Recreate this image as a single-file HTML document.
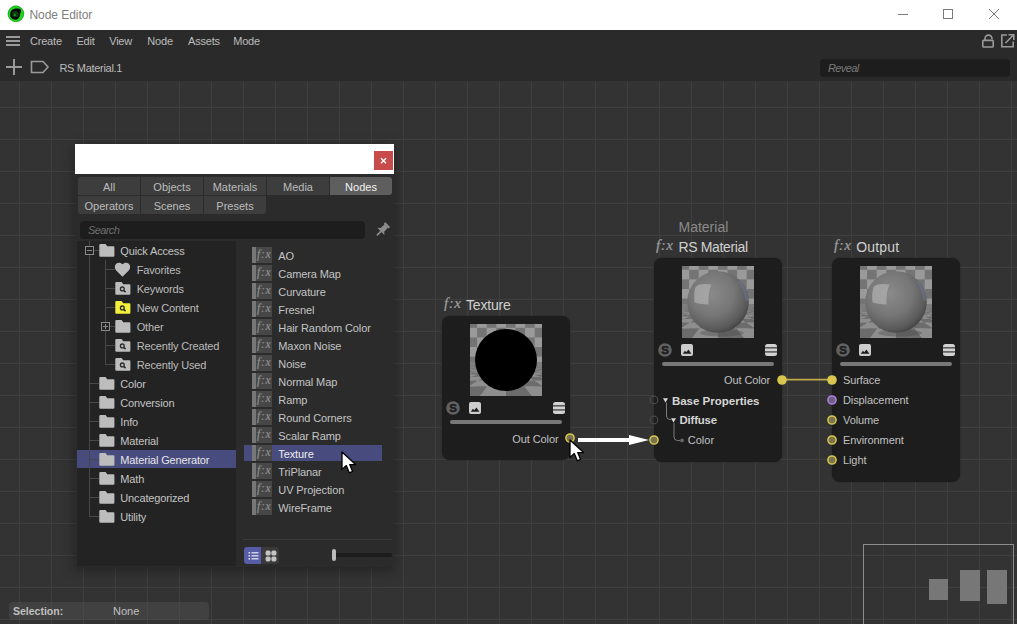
<!DOCTYPE html><html><head><meta charset="utf-8"><style>
html,body{margin:0;padding:0;width:1017px;height:624px;overflow:hidden;background:#353535;}
body{position:relative;font-family:"Liberation Sans",sans-serif;}
.b{position:absolute;}
.t{position:absolute;white-space:nowrap;}
.grid{background-color:#333333;
background-image:linear-gradient(to right,#3f3f3f 0,#3f3f3f 1px,transparent 1px),linear-gradient(to bottom,#3f3f3f 0,#3f3f3f 1px,transparent 1px);
background-size:32px 32px;background-position:19px 26px;}
</style></head><body>
<div class="b" style="left:0px;top:0px;width:1017px;height:30px;background:#ffffff;"></div>
<svg class="b" style="left:0;top:0" width="40" height="30" viewBox="0 0 40 30">
<defs><radialGradient id="lg" cx="50%" cy="50%" r="50%"><stop offset="0.55" stop-color="#0a3a0a"/><stop offset="0.75" stop-color="#10a010"/><stop offset="1" stop-color="#20e020"/></radialGradient></defs>
<circle cx="15.9" cy="13.8" r="8" fill="#1ed41e"/>
<circle cx="15.9" cy="13.8" r="7.9" fill="none" stroke="#0e8a0e" stroke-width="0.6"/>
<path d="M10.2 14.8 Q10 9.6 15.6 8.6 Q19.5 8 21 9.8 Q20.6 13 19.6 16.5 Q18.5 20 14.5 19.6 Q10.4 19 10.2 14.8 Z" fill="#000"/>
<ellipse cx="15.4" cy="14.2" rx="3.3" ry="3.1" fill="#0b3d0b"/>
<ellipse cx="14.8" cy="15" rx="1.4" ry="1.1" fill="#1a8f1a"/>
</svg>
<div class="t" style="left:29.5px;top:8.34px;font-size:12px;line-height:15px;color:#808080;font-weight:normal;font-style:normal;letter-spacing:-0.05px;font-family:'Liberation Sans', sans-serif;">Node Editor</div>
<svg class="b" style="left:880px;top:0" width="137" height="30">
<line x1="18" y1="14.5" x2="28" y2="14.5" stroke="#7a7a7a" stroke-width="1"/>
<rect x="63.5" y="9.5" width="9" height="9" fill="none" stroke="#7a7a7a" stroke-width="1"/>
<line x1="109" y1="9" x2="119" y2="19" stroke="#7a7a7a" stroke-width="1"/>
<line x1="119" y1="9" x2="109" y2="19" stroke="#7a7a7a" stroke-width="1"/>
</svg>
<div class="b" style="left:0px;top:30px;width:1017px;height:51px;background:#2a2a2a;"></div>
<div class="b" style="left:6px;top:36px;width:14px;height:2px;background:#9a9a9a;"></div><div class="b" style="left:6px;top:40px;width:14px;height:2px;background:#9a9a9a;"></div><div class="b" style="left:6px;top:44px;width:14px;height:2px;background:#9a9a9a;"></div>
<div class="t" style="left:30px;top:34.19px;font-size:11px;line-height:14px;color:#bcbcbc;font-weight:normal;font-style:normal;letter-spacing:-0.2px;font-family:'Liberation Sans', sans-serif;">Create</div>
<div class="t" style="left:76.4px;top:34.19px;font-size:11px;line-height:14px;color:#bcbcbc;font-weight:normal;font-style:normal;letter-spacing:-0.2px;font-family:'Liberation Sans', sans-serif;">Edit</div>
<div class="t" style="left:109.2px;top:34.19px;font-size:11px;line-height:14px;color:#bcbcbc;font-weight:normal;font-style:normal;letter-spacing:-0.2px;font-family:'Liberation Sans', sans-serif;">View</div>
<div class="t" style="left:147.3px;top:34.19px;font-size:11px;line-height:14px;color:#bcbcbc;font-weight:normal;font-style:normal;letter-spacing:-0.2px;font-family:'Liberation Sans', sans-serif;">Node</div>
<div class="t" style="left:188.1px;top:34.19px;font-size:11px;line-height:14px;color:#bcbcbc;font-weight:normal;font-style:normal;letter-spacing:-0.2px;font-family:'Liberation Sans', sans-serif;">Assets</div>
<div class="t" style="left:233.2px;top:34.19px;font-size:11px;line-height:14px;color:#bcbcbc;font-weight:normal;font-style:normal;letter-spacing:-0.2px;font-family:'Liberation Sans', sans-serif;">Mode</div>
<div class="b" style="left:6px;top:66px;width:16px;height:2px;background:#9a9a9a;"></div><div class="b" style="left:13px;top:59px;width:2px;height:16px;background:#9a9a9a;"></div>
<svg class="b" style="left:30px;top:60px" width="22" height="16">
<path d="M1.5 1.5 H13 L18 7 L13 12.5 H1.5 Z" fill="none" stroke="#9a9a9a" stroke-width="1.6"/></svg>
<div class="t" style="left:59.4px;top:61.19px;font-size:11px;line-height:14px;color:#bcbcbc;font-weight:normal;font-style:normal;letter-spacing:-0.3px;font-family:'Liberation Sans', sans-serif;">RS Material.1</div>
<div class="b" style="left:820px;top:59px;width:190px;height:18px;background:#1d1d1d;border-radius:4px;"></div>
<div class="t" style="left:828px;top:61.19px;font-size:11px;line-height:14px;color:#7a7a7a;font-weight:normal;font-style:italic;letter-spacing:-0.6px;font-family:'Liberation Sans', sans-serif;">Reveal</div>
<svg class="b" style="left:978px;top:30px" width="39" height="22">
<path d="M7 10 V8.6 A3.5 3.5 0 0 1 14 8.6 V9.2" fill="none" stroke="#9a9a9a" stroke-width="1.6"/>
<rect x="4.8" y="10.4" width="10.4" height="6.6" fill="none" stroke="#9a9a9a" stroke-width="1.6" rx="0.8"/>
<path d="M29 5 H23.8 V16.8 H35.2 V11.5" fill="none" stroke="#9a9a9a" stroke-width="1.6"/>
<path d="M27.5 13 L35.5 5 M30.5 4.8 H35.8 V10" fill="none" stroke="#9a9a9a" stroke-width="1.6"/>
</svg>
<div class="b grid" style="left:0;top:81px;width:1017px;height:543px;"></div>
<div class="b" style="left:75px;top:144px;width:319px;height:423px;box-shadow:0 3px 12px rgba(0,0,0,0.35);"></div>
<div class="b" style="left:75px;top:144px;width:319px;height:30px;background:#ffffff;"></div>
<div class="b" style="left:374px;top:151px;width:19px;height:19px;background:#c84b4b;"></div>
<svg class="b" style="left:374px;top:151px" width="19" height="19"><path d="M7 7.3 L12 12.3 M12 7.3 L7 12.3" stroke="#fff" stroke-width="1.4"/></svg>
<div class="b" style="left:75px;top:174px;width:319px;height:393px;background:#2b2b2b;"></div>
<div class="b" style="left:78px;top:177px;width:62px;height:18px;background:#3d3d3d;border-radius:3px 0 0 0;"></div>
<div class="t" style="left:78px;top:177px;width:62px;height:18px;"></div>
<div class="b" style="left:141px;top:177px;width:62px;height:18px;background:#3d3d3d;"></div>
<div class="t" style="left:141px;top:177px;width:62px;height:18px;"></div>
<div class="b" style="left:204px;top:177px;width:62px;height:18px;background:#3d3d3d;"></div>
<div class="t" style="left:204px;top:177px;width:62px;height:18px;"></div>
<div class="b" style="left:267px;top:177px;width:62px;height:18px;background:#3d3d3d;"></div>
<div class="t" style="left:267px;top:177px;width:62px;height:18px;"></div>
<div class="b" style="left:330px;top:177px;width:62px;height:18px;background:#5e5e5e;border-radius:0 3px 3px 0;"></div>
<div class="t" style="left:330px;top:177px;width:62px;height:18px;"></div>
<div class="b" style="left:78px;top:196px;width:62px;height:18px;background:#3d3d3d;border-radius:0 0 0 3px;"></div>
<div class="b" style="left:141px;top:196px;width:62px;height:18px;background:#3d3d3d;"></div>
<div class="b" style="left:204px;top:196px;width:62px;height:18px;background:#3d3d3d;border-radius:0 0 3px 0;"></div>
<div class="t" style="left:78px;top:180.19px;font-size:11px;line-height:14px;color:#bcbcbc;font-weight:normal;font-style:normal;letter-spacing:0px;font-family:'Liberation Sans', sans-serif;width:62px;text-align:center;">All</div>
<div class="t" style="left:141px;top:180.19px;font-size:11px;line-height:14px;color:#bcbcbc;font-weight:normal;font-style:normal;letter-spacing:0px;font-family:'Liberation Sans', sans-serif;width:62px;text-align:center;">Objects</div>
<div class="t" style="left:204px;top:180.19px;font-size:11px;line-height:14px;color:#bcbcbc;font-weight:normal;font-style:normal;letter-spacing:0px;font-family:'Liberation Sans', sans-serif;width:62px;text-align:center;">Materials</div>
<div class="t" style="left:267px;top:180.19px;font-size:11px;line-height:14px;color:#bcbcbc;font-weight:normal;font-style:normal;letter-spacing:0px;font-family:'Liberation Sans', sans-serif;width:62px;text-align:center;">Media</div>
<div class="t" style="left:330px;top:180.19px;font-size:11px;line-height:14px;color:#f2f2f2;font-weight:normal;font-style:normal;letter-spacing:0px;font-family:'Liberation Sans', sans-serif;width:62px;text-align:center;">Nodes</div>
<div class="t" style="left:78px;top:199.19px;font-size:11px;line-height:14px;color:#bcbcbc;font-weight:normal;font-style:normal;letter-spacing:0px;font-family:'Liberation Sans', sans-serif;width:62px;text-align:center;">Operators</div>
<div class="t" style="left:141px;top:199.19px;font-size:11px;line-height:14px;color:#bcbcbc;font-weight:normal;font-style:normal;letter-spacing:0px;font-family:'Liberation Sans', sans-serif;width:62px;text-align:center;">Scenes</div>
<div class="t" style="left:204px;top:199.19px;font-size:11px;line-height:14px;color:#bcbcbc;font-weight:normal;font-style:normal;letter-spacing:0px;font-family:'Liberation Sans', sans-serif;width:62px;text-align:center;">Presets</div>
<div class="b" style="left:80px;top:221px;width:285px;height:18px;background:#1d1d1d;border-radius:4px;"></div>
<div class="t" style="left:88px;top:222.69px;font-size:11px;line-height:14px;color:#6e6e6e;font-weight:normal;font-style:italic;letter-spacing:-0.6px;font-family:'Liberation Sans', sans-serif;">Search</div>
<svg class="b" style="left:360px;top:210px" width="40" height="40">
<g transform="translate(27.6,14.6) rotate(45)" fill="#8c8c8c">
<rect x="-3.4" y="0" width="6.8" height="2.2" rx="0.6"/>
<path d="M-2.3 2 H2.3 L2.6 7.4 L5 9.6 H-5 L-2.6 7.4 Z"/>
<rect x="-0.85" y="9" width="1.7" height="6.3" rx="0.8"/>
</g></svg>
<div class="b" style="left:77px;top:241px;width:159px;height:325px;background:#232323;"></div>
<div class="b" style="left:77px;top:450px;width:159px;height:18px;background:#474b7e;"></div>
<div class="b" style="left:89px;top:241px;width:1px;height:276px;background:#484848;"></div>
<div class="b" style="left:105px;top:260px;width:1px;height:105px;background:#484848;"></div>
<div class="b" style="left:89px;top:250px;width:10px;height:1px;background:#484848;"></div>
<svg class="b" style="left:99px;top:244px" width="16" height="13" viewBox="0 0 16 13">
<path d="M0.3 1.2 Q0.3 0 1.4 0 H6.6 L8.2 2.2 H14.4 Q15.4 2.2 15.4 3.3 V11.7 Q15.4 12.8 14.3 12.8 H1.4 Q0.3 12.8 0.3 11.7 Z" fill="#bdbdbd"/></svg>
<div class="t" style="left:120.3px;top:244.19px;font-size:11px;line-height:14px;color:#c4c4c4;font-weight:normal;font-style:normal;letter-spacing:-0.15px;font-family:'Liberation Sans', sans-serif;">Quick Access</div>
<div class="b" style="left:89px;top:383px;width:10px;height:1px;background:#484848;"></div>
<svg class="b" style="left:99px;top:377px" width="16" height="13" viewBox="0 0 16 13">
<path d="M0.3 1.2 Q0.3 0 1.4 0 H6.6 L8.2 2.2 H14.4 Q15.4 2.2 15.4 3.3 V11.7 Q15.4 12.8 14.3 12.8 H1.4 Q0.3 12.8 0.3 11.7 Z" fill="#bdbdbd"/></svg>
<div class="t" style="left:120.3px;top:377.19px;font-size:11px;line-height:14px;color:#c4c4c4;font-weight:normal;font-style:normal;letter-spacing:-0.15px;font-family:'Liberation Sans', sans-serif;">Color</div>
<div class="b" style="left:89px;top:402px;width:10px;height:1px;background:#484848;"></div>
<svg class="b" style="left:99px;top:396px" width="16" height="13" viewBox="0 0 16 13">
<path d="M0.3 1.2 Q0.3 0 1.4 0 H6.6 L8.2 2.2 H14.4 Q15.4 2.2 15.4 3.3 V11.7 Q15.4 12.8 14.3 12.8 H1.4 Q0.3 12.8 0.3 11.7 Z" fill="#bdbdbd"/></svg>
<div class="t" style="left:120.3px;top:396.19px;font-size:11px;line-height:14px;color:#c4c4c4;font-weight:normal;font-style:normal;letter-spacing:-0.15px;font-family:'Liberation Sans', sans-serif;">Conversion</div>
<div class="b" style="left:89px;top:421px;width:10px;height:1px;background:#484848;"></div>
<svg class="b" style="left:99px;top:415px" width="16" height="13" viewBox="0 0 16 13">
<path d="M0.3 1.2 Q0.3 0 1.4 0 H6.6 L8.2 2.2 H14.4 Q15.4 2.2 15.4 3.3 V11.7 Q15.4 12.8 14.3 12.8 H1.4 Q0.3 12.8 0.3 11.7 Z" fill="#bdbdbd"/></svg>
<div class="t" style="left:120.3px;top:415.19px;font-size:11px;line-height:14px;color:#c4c4c4;font-weight:normal;font-style:normal;letter-spacing:-0.15px;font-family:'Liberation Sans', sans-serif;">Info</div>
<div class="b" style="left:89px;top:440px;width:10px;height:1px;background:#484848;"></div>
<svg class="b" style="left:99px;top:434px" width="16" height="13" viewBox="0 0 16 13">
<path d="M0.3 1.2 Q0.3 0 1.4 0 H6.6 L8.2 2.2 H14.4 Q15.4 2.2 15.4 3.3 V11.7 Q15.4 12.8 14.3 12.8 H1.4 Q0.3 12.8 0.3 11.7 Z" fill="#bdbdbd"/></svg>
<div class="t" style="left:120.3px;top:434.19px;font-size:11px;line-height:14px;color:#c4c4c4;font-weight:normal;font-style:normal;letter-spacing:-0.15px;font-family:'Liberation Sans', sans-serif;">Material</div>
<div class="b" style="left:89px;top:459px;width:10px;height:1px;background:#484848;"></div>
<svg class="b" style="left:99px;top:453px" width="16" height="13" viewBox="0 0 16 13">
<path d="M0.3 1.2 Q0.3 0 1.4 0 H6.6 L8.2 2.2 H14.4 Q15.4 2.2 15.4 3.3 V11.7 Q15.4 12.8 14.3 12.8 H1.4 Q0.3 12.8 0.3 11.7 Z" fill="#bdbdbd"/></svg>
<div class="t" style="left:120.3px;top:453.19px;font-size:11px;line-height:14px;color:#e6e6e6;font-weight:normal;font-style:normal;letter-spacing:-0.15px;font-family:'Liberation Sans', sans-serif;">Material Generator</div>
<div class="b" style="left:89px;top:478px;width:10px;height:1px;background:#484848;"></div>
<svg class="b" style="left:99px;top:472px" width="16" height="13" viewBox="0 0 16 13">
<path d="M0.3 1.2 Q0.3 0 1.4 0 H6.6 L8.2 2.2 H14.4 Q15.4 2.2 15.4 3.3 V11.7 Q15.4 12.8 14.3 12.8 H1.4 Q0.3 12.8 0.3 11.7 Z" fill="#bdbdbd"/></svg>
<div class="t" style="left:120.3px;top:472.19px;font-size:11px;line-height:14px;color:#c4c4c4;font-weight:normal;font-style:normal;letter-spacing:-0.15px;font-family:'Liberation Sans', sans-serif;">Math</div>
<div class="b" style="left:89px;top:497px;width:10px;height:1px;background:#484848;"></div>
<svg class="b" style="left:99px;top:491px" width="16" height="13" viewBox="0 0 16 13">
<path d="M0.3 1.2 Q0.3 0 1.4 0 H6.6 L8.2 2.2 H14.4 Q15.4 2.2 15.4 3.3 V11.7 Q15.4 12.8 14.3 12.8 H1.4 Q0.3 12.8 0.3 11.7 Z" fill="#bdbdbd"/></svg>
<div class="t" style="left:120.3px;top:491.19px;font-size:11px;line-height:14px;color:#c4c4c4;font-weight:normal;font-style:normal;letter-spacing:-0.15px;font-family:'Liberation Sans', sans-serif;">Uncategorized</div>
<div class="b" style="left:89px;top:516px;width:10px;height:1px;background:#484848;"></div>
<svg class="b" style="left:99px;top:510px" width="16" height="13" viewBox="0 0 16 13">
<path d="M0.3 1.2 Q0.3 0 1.4 0 H6.6 L8.2 2.2 H14.4 Q15.4 2.2 15.4 3.3 V11.7 Q15.4 12.8 14.3 12.8 H1.4 Q0.3 12.8 0.3 11.7 Z" fill="#bdbdbd"/></svg>
<div class="t" style="left:120.3px;top:510.19px;font-size:11px;line-height:14px;color:#c4c4c4;font-weight:normal;font-style:normal;letter-spacing:-0.15px;font-family:'Liberation Sans', sans-serif;">Utility</div>
<div class="b" style="left:85px;top:246px;width:9px;height:9px;background:#232323;box-sizing:border-box;border:1px solid #8a8a8a;"></div>
<div class="b" style="left:87px;top:250px;width:5px;height:1px;background:#8a8a8a;"></div>
<div class="b" style="left:105px;top:269px;width:10px;height:1px;background:#484848;"></div>
<svg class="b" style="left:114px;top:261px" width="17" height="17" viewBox="0 0 17 17">
<path d="M8.5 15.8 L2.2 9.4 C0.4 7.6 0.3 4.6 2.2 2.8 C4 1.1 6.8 1.3 8.5 3.3 C10.2 1.3 13 1.1 14.8 2.8 C16.7 4.6 16.6 7.6 14.8 9.4 Z" fill="#bdbdbd"/></svg>
<div class="t" style="left:136.7px;top:263.19px;font-size:11px;line-height:14px;color:#bcbcbc;font-weight:normal;font-style:normal;letter-spacing:-0.15px;font-family:'Liberation Sans', sans-serif;">Favorites</div>
<div class="b" style="left:105px;top:288px;width:10px;height:1px;background:#484848;"></div>
<svg class="b" style="left:115px;top:282px" width="16" height="13" viewBox="0 0 16 13">
<path d="M0.3 1.2 Q0.3 0 1.4 0 H6.6 L8.2 2.2 H14.4 Q15.4 2.2 15.4 3.3 V11.7 Q15.4 12.8 14.3 12.8 H1.4 Q0.3 12.8 0.3 11.7 Z" fill="#bdbdbd"/><circle cx="7.3" cy="6.9" r="1.9" fill="none" stroke="#2a2a2a" stroke-width="1.3"/><path d="M8.6 8.2 L10.6 10.1" stroke="#2a2a2a" stroke-width="1.5"/></svg>
<div class="t" style="left:136.7px;top:282.19px;font-size:11px;line-height:14px;color:#bcbcbc;font-weight:normal;font-style:normal;letter-spacing:-0.15px;font-family:'Liberation Sans', sans-serif;">Keywords</div>
<div class="b" style="left:105px;top:307px;width:10px;height:1px;background:#484848;"></div>
<svg class="b" style="left:115px;top:301px" width="16" height="13" viewBox="0 0 16 13">
<path d="M0.3 1.2 Q0.3 0 1.4 0 H6.6 L8.2 2.2 H14.4 Q15.4 2.2 15.4 3.3 V11.7 Q15.4 12.8 14.3 12.8 H1.4 Q0.3 12.8 0.3 11.7 Z" fill="#f2f03c"/><circle cx="7.3" cy="6.9" r="1.9" fill="none" stroke="#2a2a2a" stroke-width="1.3"/><path d="M8.6 8.2 L10.6 10.1" stroke="#2a2a2a" stroke-width="1.5"/></svg>
<div class="t" style="left:136.7px;top:301.19px;font-size:11px;line-height:14px;color:#bcbcbc;font-weight:normal;font-style:normal;letter-spacing:-0.15px;font-family:'Liberation Sans', sans-serif;">New Content</div>
<div class="b" style="left:105px;top:326px;width:10px;height:1px;background:#484848;"></div>
<svg class="b" style="left:115px;top:320px" width="16" height="13" viewBox="0 0 16 13">
<path d="M0.3 1.2 Q0.3 0 1.4 0 H6.6 L8.2 2.2 H14.4 Q15.4 2.2 15.4 3.3 V11.7 Q15.4 12.8 14.3 12.8 H1.4 Q0.3 12.8 0.3 11.7 Z" fill="#bdbdbd"/></svg>
<div class="b" style="left:101px;top:322px;width:9px;height:9px;background:#232323;box-sizing:border-box;border:1px solid #8a8a8a;"></div>
<div class="b" style="left:103px;top:326px;width:5px;height:1px;background:#8a8a8a;"></div><div class="b" style="left:105px;top:324px;width:1px;height:5px;background:#8a8a8a;"></div>
<div class="t" style="left:136.7px;top:320.19px;font-size:11px;line-height:14px;color:#bcbcbc;font-weight:normal;font-style:normal;letter-spacing:-0.15px;font-family:'Liberation Sans', sans-serif;">Other</div>
<div class="b" style="left:105px;top:345px;width:10px;height:1px;background:#484848;"></div>
<svg class="b" style="left:115px;top:339px" width="16" height="13" viewBox="0 0 16 13">
<path d="M0.3 1.2 Q0.3 0 1.4 0 H6.6 L8.2 2.2 H14.4 Q15.4 2.2 15.4 3.3 V11.7 Q15.4 12.8 14.3 12.8 H1.4 Q0.3 12.8 0.3 11.7 Z" fill="#bdbdbd"/><circle cx="7.3" cy="6.9" r="1.9" fill="none" stroke="#2a2a2a" stroke-width="1.3"/><path d="M8.6 8.2 L10.6 10.1" stroke="#2a2a2a" stroke-width="1.5"/></svg>
<div class="t" style="left:136.7px;top:339.19px;font-size:11px;line-height:14px;color:#bcbcbc;font-weight:normal;font-style:normal;letter-spacing:-0.15px;font-family:'Liberation Sans', sans-serif;">Recently Created</div>
<div class="b" style="left:105px;top:364px;width:10px;height:1px;background:#484848;"></div>
<svg class="b" style="left:115px;top:358px" width="16" height="13" viewBox="0 0 16 13">
<path d="M0.3 1.2 Q0.3 0 1.4 0 H6.6 L8.2 2.2 H14.4 Q15.4 2.2 15.4 3.3 V11.7 Q15.4 12.8 14.3 12.8 H1.4 Q0.3 12.8 0.3 11.7 Z" fill="#bdbdbd"/><circle cx="7.3" cy="6.9" r="1.9" fill="none" stroke="#2a2a2a" stroke-width="1.3"/><path d="M8.6 8.2 L10.6 10.1" stroke="#2a2a2a" stroke-width="1.5"/></svg>
<div class="t" style="left:136.7px;top:358.19px;font-size:11px;line-height:14px;color:#bcbcbc;font-weight:normal;font-style:normal;letter-spacing:-0.15px;font-family:'Liberation Sans', sans-serif;">Recently Used</div>
<div class="b" style="left:244px;top:445px;width:138px;height:16px;background:#474b7e;"></div>
<div class="b" style="left:252px;top:247px;width:4px;height:16px;background:#777777;"></div>
<div class="b" style="left:256px;top:247px;width:16px;height:16px;background:#474747;"></div>
<svg class="b" style="left:254px;top:247px" width="20" height="16"><text x="3" y="11" font-family="Liberation Serif" font-style="italic" font-size="11.5" letter-spacing="0.8" fill="#8e8e8e" stroke="#8e8e8e" stroke-width="0.2">f:x</text></svg>
<div class="t" style="left:278.3px;top:249.19px;font-size:11px;line-height:14px;color:#c4c4c4;font-weight:normal;font-style:normal;letter-spacing:-0.1px;font-family:'Liberation Sans', sans-serif;">AO</div>
<div class="b" style="left:252px;top:265px;width:4px;height:16px;background:#777777;"></div>
<div class="b" style="left:256px;top:265px;width:16px;height:16px;background:#474747;"></div>
<svg class="b" style="left:254px;top:265px" width="20" height="16"><text x="3" y="11" font-family="Liberation Serif" font-style="italic" font-size="11.5" letter-spacing="0.8" fill="#8e8e8e" stroke="#8e8e8e" stroke-width="0.2">f:x</text></svg>
<div class="t" style="left:278.3px;top:267.19px;font-size:11px;line-height:14px;color:#c4c4c4;font-weight:normal;font-style:normal;letter-spacing:-0.1px;font-family:'Liberation Sans', sans-serif;">Camera Map</div>
<div class="b" style="left:252px;top:283px;width:4px;height:16px;background:#777777;"></div>
<div class="b" style="left:256px;top:283px;width:16px;height:16px;background:#474747;"></div>
<svg class="b" style="left:254px;top:283px" width="20" height="16"><text x="3" y="11" font-family="Liberation Serif" font-style="italic" font-size="11.5" letter-spacing="0.8" fill="#8e8e8e" stroke="#8e8e8e" stroke-width="0.2">f:x</text></svg>
<div class="t" style="left:278.3px;top:285.19px;font-size:11px;line-height:14px;color:#c4c4c4;font-weight:normal;font-style:normal;letter-spacing:-0.1px;font-family:'Liberation Sans', sans-serif;">Curvature</div>
<div class="b" style="left:252px;top:301px;width:4px;height:16px;background:#777777;"></div>
<div class="b" style="left:256px;top:301px;width:16px;height:16px;background:#474747;"></div>
<svg class="b" style="left:254px;top:301px" width="20" height="16"><text x="3" y="11" font-family="Liberation Serif" font-style="italic" font-size="11.5" letter-spacing="0.8" fill="#8e8e8e" stroke="#8e8e8e" stroke-width="0.2">f:x</text></svg>
<div class="t" style="left:278.3px;top:303.19px;font-size:11px;line-height:14px;color:#c4c4c4;font-weight:normal;font-style:normal;letter-spacing:-0.1px;font-family:'Liberation Sans', sans-serif;">Fresnel</div>
<div class="b" style="left:252px;top:319px;width:4px;height:16px;background:#777777;"></div>
<div class="b" style="left:256px;top:319px;width:16px;height:16px;background:#474747;"></div>
<svg class="b" style="left:254px;top:319px" width="20" height="16"><text x="3" y="11" font-family="Liberation Serif" font-style="italic" font-size="11.5" letter-spacing="0.8" fill="#8e8e8e" stroke="#8e8e8e" stroke-width="0.2">f:x</text></svg>
<div class="t" style="left:278.3px;top:321.19px;font-size:11px;line-height:14px;color:#c4c4c4;font-weight:normal;font-style:normal;letter-spacing:-0.1px;font-family:'Liberation Sans', sans-serif;">Hair Random Color</div>
<div class="b" style="left:252px;top:337px;width:4px;height:16px;background:#777777;"></div>
<div class="b" style="left:256px;top:337px;width:16px;height:16px;background:#474747;"></div>
<svg class="b" style="left:254px;top:337px" width="20" height="16"><text x="3" y="11" font-family="Liberation Serif" font-style="italic" font-size="11.5" letter-spacing="0.8" fill="#8e8e8e" stroke="#8e8e8e" stroke-width="0.2">f:x</text></svg>
<div class="t" style="left:278.3px;top:339.19px;font-size:11px;line-height:14px;color:#c4c4c4;font-weight:normal;font-style:normal;letter-spacing:-0.1px;font-family:'Liberation Sans', sans-serif;">Maxon Noise</div>
<div class="b" style="left:252px;top:355px;width:4px;height:16px;background:#777777;"></div>
<div class="b" style="left:256px;top:355px;width:16px;height:16px;background:#474747;"></div>
<svg class="b" style="left:254px;top:355px" width="20" height="16"><text x="3" y="11" font-family="Liberation Serif" font-style="italic" font-size="11.5" letter-spacing="0.8" fill="#8e8e8e" stroke="#8e8e8e" stroke-width="0.2">f:x</text></svg>
<div class="t" style="left:278.3px;top:357.19px;font-size:11px;line-height:14px;color:#c4c4c4;font-weight:normal;font-style:normal;letter-spacing:-0.1px;font-family:'Liberation Sans', sans-serif;">Noise</div>
<div class="b" style="left:252px;top:373px;width:4px;height:16px;background:#777777;"></div>
<div class="b" style="left:256px;top:373px;width:16px;height:16px;background:#474747;"></div>
<svg class="b" style="left:254px;top:373px" width="20" height="16"><text x="3" y="11" font-family="Liberation Serif" font-style="italic" font-size="11.5" letter-spacing="0.8" fill="#8e8e8e" stroke="#8e8e8e" stroke-width="0.2">f:x</text></svg>
<div class="t" style="left:278.3px;top:375.19px;font-size:11px;line-height:14px;color:#c4c4c4;font-weight:normal;font-style:normal;letter-spacing:-0.1px;font-family:'Liberation Sans', sans-serif;">Normal Map</div>
<div class="b" style="left:252px;top:391px;width:4px;height:16px;background:#777777;"></div>
<div class="b" style="left:256px;top:391px;width:16px;height:16px;background:#474747;"></div>
<svg class="b" style="left:254px;top:391px" width="20" height="16"><text x="3" y="11" font-family="Liberation Serif" font-style="italic" font-size="11.5" letter-spacing="0.8" fill="#8e8e8e" stroke="#8e8e8e" stroke-width="0.2">f:x</text></svg>
<div class="t" style="left:278.3px;top:393.19px;font-size:11px;line-height:14px;color:#c4c4c4;font-weight:normal;font-style:normal;letter-spacing:-0.1px;font-family:'Liberation Sans', sans-serif;">Ramp</div>
<div class="b" style="left:252px;top:409px;width:4px;height:16px;background:#777777;"></div>
<div class="b" style="left:256px;top:409px;width:16px;height:16px;background:#474747;"></div>
<svg class="b" style="left:254px;top:409px" width="20" height="16"><text x="3" y="11" font-family="Liberation Serif" font-style="italic" font-size="11.5" letter-spacing="0.8" fill="#8e8e8e" stroke="#8e8e8e" stroke-width="0.2">f:x</text></svg>
<div class="t" style="left:278.3px;top:411.19px;font-size:11px;line-height:14px;color:#c4c4c4;font-weight:normal;font-style:normal;letter-spacing:-0.1px;font-family:'Liberation Sans', sans-serif;">Round Corners</div>
<div class="b" style="left:252px;top:427px;width:4px;height:16px;background:#777777;"></div>
<div class="b" style="left:256px;top:427px;width:16px;height:16px;background:#474747;"></div>
<svg class="b" style="left:254px;top:427px" width="20" height="16"><text x="3" y="11" font-family="Liberation Serif" font-style="italic" font-size="11.5" letter-spacing="0.8" fill="#8e8e8e" stroke="#8e8e8e" stroke-width="0.2">f:x</text></svg>
<div class="t" style="left:278.3px;top:429.19px;font-size:11px;line-height:14px;color:#c4c4c4;font-weight:normal;font-style:normal;letter-spacing:-0.1px;font-family:'Liberation Sans', sans-serif;">Scalar Ramp</div>
<div class="b" style="left:252px;top:445px;width:4px;height:16px;background:#777777;"></div>
<div class="b" style="left:256px;top:445px;width:16px;height:16px;background:#474747;"></div>
<svg class="b" style="left:254px;top:445px" width="20" height="16"><text x="3" y="11" font-family="Liberation Serif" font-style="italic" font-size="11.5" letter-spacing="0.8" fill="#8e8e8e" stroke="#8e8e8e" stroke-width="0.2">f:x</text></svg>
<div class="t" style="left:278.3px;top:447.19px;font-size:11px;line-height:14px;color:#eeeeee;font-weight:normal;font-style:normal;letter-spacing:-0.1px;font-family:'Liberation Sans', sans-serif;">Texture</div>
<div class="b" style="left:252px;top:463px;width:4px;height:16px;background:#777777;"></div>
<div class="b" style="left:256px;top:463px;width:16px;height:16px;background:#474747;"></div>
<svg class="b" style="left:254px;top:463px" width="20" height="16"><text x="3" y="11" font-family="Liberation Serif" font-style="italic" font-size="11.5" letter-spacing="0.8" fill="#8e8e8e" stroke="#8e8e8e" stroke-width="0.2">f:x</text></svg>
<div class="t" style="left:278.3px;top:465.19px;font-size:11px;line-height:14px;color:#c4c4c4;font-weight:normal;font-style:normal;letter-spacing:-0.1px;font-family:'Liberation Sans', sans-serif;">TriPlanar</div>
<div class="b" style="left:252px;top:481px;width:4px;height:16px;background:#777777;"></div>
<div class="b" style="left:256px;top:481px;width:16px;height:16px;background:#474747;"></div>
<svg class="b" style="left:254px;top:481px" width="20" height="16"><text x="3" y="11" font-family="Liberation Serif" font-style="italic" font-size="11.5" letter-spacing="0.8" fill="#8e8e8e" stroke="#8e8e8e" stroke-width="0.2">f:x</text></svg>
<div class="t" style="left:278.3px;top:483.19px;font-size:11px;line-height:14px;color:#c4c4c4;font-weight:normal;font-style:normal;letter-spacing:-0.1px;font-family:'Liberation Sans', sans-serif;">UV Projection</div>
<div class="b" style="left:252px;top:499px;width:4px;height:16px;background:#777777;"></div>
<div class="b" style="left:256px;top:499px;width:16px;height:16px;background:#474747;"></div>
<svg class="b" style="left:254px;top:499px" width="20" height="16"><text x="3" y="11" font-family="Liberation Serif" font-style="italic" font-size="11.5" letter-spacing="0.8" fill="#8e8e8e" stroke="#8e8e8e" stroke-width="0.2">f:x</text></svg>
<div class="t" style="left:278.3px;top:501.19px;font-size:11px;line-height:14px;color:#c4c4c4;font-weight:normal;font-style:normal;letter-spacing:-0.1px;font-family:'Liberation Sans', sans-serif;">WireFrame</div>
<div class="b" style="left:243px;top:539px;width:149px;height:1px;background:#3a3a3a;"></div>
<div class="b" style="left:244px;top:547px;width:17px;height:17px;background:#575ca6;border-radius:3px 0 0 3px;"></div>
<div class="b" style="left:261px;top:547px;width:18px;height:17px;background:#3a3a3a;border-radius:0 3px 3px 0;"></div>
<svg class="b" style="left:244px;top:547px" width="35" height="17">
<g fill="#d8d8ec"><rect x="4.5" y="5" width="1.6" height="1.6"/><rect x="4.5" y="8" width="1.6" height="1.6"/><rect x="4.5" y="11" width="1.6" height="1.6"/>
<rect x="7.5" y="5.1" width="7" height="1.4"/><rect x="7.5" y="8.1" width="7" height="1.4"/><rect x="7.5" y="11.1" width="7" height="1.4"/></g>
<g fill="#c4c4c4"><rect x="21.6" y="3.6" width="5" height="5" rx="1.6"/><rect x="27.4" y="3.6" width="5" height="5" rx="1.6"/><rect x="21.6" y="9.4" width="5" height="5" rx="1.6"/><rect x="27.4" y="9.4" width="5" height="5" rx="1.6"/></g>
</svg>
<div class="b" style="left:334px;top:553px;width:58px;height:4px;background:#1c1c1c;border-radius:2px;"></div>
<div class="b" style="left:332px;top:549px;width:4px;height:12px;background:#bbbbbb;border-radius:2px;"></div>
<svg class="b" style="left:441px;top:295px" width="26" height="22"><text x="3" y="13.2" font-family="Liberation Serif" font-style="italic" font-size="15" letter-spacing="0.6" fill="#a0a0a0" stroke="#a0a0a0" stroke-width="0.2">f:x</text></svg>
<div class="t" style="left:466px;top:296.15px;font-size:14px;line-height:18px;color:#d0d0d0;font-weight:normal;font-style:normal;letter-spacing:-0.2px;font-family:'Liberation Sans', sans-serif;">Texture</div>
<div class="b" style="left:442px;top:316px;width:128px;height:144px;background:#1d1d1d;border-radius:8px;box-shadow:0 0 1.5px rgba(0,0,0,0.45);"></div>
<svg class="b" style="left:470px;top:324px" width="72" height="72" viewBox="0 0 72 72">
<defs>
<pattern id="chk470" width="19.2" height="19.2" patternUnits="userSpaceOnUse" x="-2.5" y="-5.8">
<rect width="19.2" height="19.2" fill="#9a9a9a"/><rect width="9.6" height="9.6" fill="#747474"/><rect x="9.6" y="9.6" width="9.6" height="9.6" fill="#747474"/></pattern>
<clipPath id="cl470"><rect width="72" height="72"/></clipPath>
</defs>
<g clip-path="url(#cl470)">
<rect width="72" height="72" fill="url(#chk470)"/>
<rect y="38" width="72" height="8" fill="#7e7e7e"/>
<path d="M-18.7 73.8 L8.6 73.8 L17.4 62.3 L-1.1 62.3 Z" fill="#6c6c6c"/><path d="M8.6 73.8 L36.0 73.8 L36.0 62.3 L17.4 62.3 Z" fill="#8e8e8e"/><path d="M36.0 73.8 L63.4 73.8 L54.6 62.3 L36.0 62.3 Z" fill="#6c6c6c"/><path d="M63.4 73.8 L90.7 73.8 L73.1 62.3 L54.6 62.3 Z" fill="#8e8e8e"/><path d="M-19.7 62.3 L-1.1 62.3 L7.9 56.4 L-6.2 56.4 Z" fill="#6c6c6c"/><path d="M-1.1 62.3 L17.4 62.3 L21.9 56.4 L7.9 56.4 Z" fill="#8e8e8e"/><path d="M17.4 62.3 L36.0 62.3 L36.0 56.4 L21.9 56.4 Z" fill="#6c6c6c"/><path d="M36.0 62.3 L54.6 62.3 L50.1 56.4 L36.0 56.4 Z" fill="#8e8e8e"/><path d="M54.6 62.3 L73.1 62.3 L64.1 56.4 L50.1 56.4 Z" fill="#6c6c6c"/><path d="M73.1 62.3 L91.7 62.3 L78.2 56.4 L64.1 56.4 Z" fill="#8e8e8e"/><path d="M-20.2 56.4 L-6.2 56.4 L2.1 52.8 L-9.2 52.8 Z" fill="#6c6c6c"/><path d="M-6.2 56.4 L7.9 56.4 L13.4 52.8 L2.1 52.8 Z" fill="#8e8e8e"/><path d="M7.9 56.4 L21.9 56.4 L24.7 52.8 L13.4 52.8 Z" fill="#6c6c6c"/><path d="M21.9 56.4 L36.0 56.4 L36.0 52.8 L24.7 52.8 Z" fill="#8e8e8e"/><path d="M36.0 56.4 L50.1 56.4 L47.3 52.8 L36.0 52.8 Z" fill="#6c6c6c"/><path d="M50.1 56.4 L64.1 56.4 L58.6 52.8 L47.3 52.8 Z" fill="#8e8e8e"/><path d="M64.1 56.4 L78.2 56.4 L69.9 52.8 L58.6 52.8 Z" fill="#6c6c6c"/><path d="M78.2 56.4 L92.2 56.4 L81.2 52.8 L69.9 52.8 Z" fill="#8e8e8e"/><path d="M-9.2 52.8 L2.1 52.8 L7.6 50.4 L-1.8 50.4 Z" fill="#8e8e8e"/><path d="M2.1 52.8 L13.4 52.8 L17.1 50.4 L7.6 50.4 Z" fill="#6c6c6c"/><path d="M13.4 52.8 L24.7 52.8 L26.5 50.4 L17.1 50.4 Z" fill="#8e8e8e"/><path d="M24.7 52.8 L36.0 52.8 L36.0 50.4 L26.5 50.4 Z" fill="#6c6c6c"/><path d="M36.0 52.8 L47.3 52.8 L45.5 50.4 L36.0 50.4 Z" fill="#8e8e8e"/><path d="M47.3 52.8 L58.6 52.8 L54.9 50.4 L45.5 50.4 Z" fill="#6c6c6c"/><path d="M58.6 52.8 L69.9 52.8 L64.4 50.4 L54.9 50.4 Z" fill="#8e8e8e"/><path d="M69.9 52.8 L81.2 52.8 L73.8 50.4 L64.4 50.4 Z" fill="#6c6c6c"/><path d="M-11.3 50.4 L-1.8 50.4 L3.5 48.6 L-4.6 48.6 Z" fill="#8e8e8e"/><path d="M-1.8 50.4 L7.6 50.4 L11.6 48.6 L3.5 48.6 Z" fill="#6c6c6c"/><path d="M7.6 50.4 L17.1 50.4 L19.8 48.6 L11.6 48.6 Z" fill="#8e8e8e"/><path d="M17.1 50.4 L26.5 50.4 L27.9 48.6 L19.8 48.6 Z" fill="#6c6c6c"/><path d="M26.5 50.4 L36.0 50.4 L36.0 48.6 L27.9 48.6 Z" fill="#8e8e8e"/><path d="M36.0 50.4 L45.5 50.4 L44.1 48.6 L36.0 48.6 Z" fill="#6c6c6c"/><path d="M45.5 50.4 L54.9 50.4 L52.2 48.6 L44.1 48.6 Z" fill="#8e8e8e"/><path d="M54.9 50.4 L64.4 50.4 L60.4 48.6 L52.2 48.6 Z" fill="#6c6c6c"/><path d="M64.4 50.4 L73.8 50.4 L68.5 48.6 L60.4 48.6 Z" fill="#8e8e8e"/><path d="M73.8 50.4 L83.3 50.4 L76.6 48.6 L68.5 48.6 Z" fill="#6c6c6c"/><path d="M-12.8 48.6 L-4.6 48.6 L0.4 47.3 L-6.7 47.3 Z" fill="#8e8e8e"/><path d="M-4.6 48.6 L3.5 48.6 L7.5 47.3 L0.4 47.3 Z" fill="#6c6c6c"/><path d="M3.5 48.6 L11.6 48.6 L14.6 47.3 L7.5 47.3 Z" fill="#8e8e8e"/><path d="M11.6 48.6 L19.8 48.6 L21.8 47.3 L14.6 47.3 Z" fill="#6c6c6c"/><path d="M19.8 48.6 L27.9 48.6 L28.9 47.3 L21.8 47.3 Z" fill="#8e8e8e"/><path d="M27.9 48.6 L36.0 48.6 L36.0 47.3 L28.9 47.3 Z" fill="#6c6c6c"/><path d="M36.0 48.6 L44.1 48.6 L43.1 47.3 L36.0 47.3 Z" fill="#8e8e8e"/><path d="M44.1 48.6 L52.2 48.6 L50.2 47.3 L43.1 47.3 Z" fill="#6c6c6c"/><path d="M52.2 48.6 L60.4 48.6 L57.4 47.3 L50.2 47.3 Z" fill="#8e8e8e"/><path d="M60.4 48.6 L68.5 48.6 L64.5 47.3 L57.4 47.3 Z" fill="#6c6c6c"/><path d="M68.5 48.6 L76.6 48.6 L71.6 47.3 L64.5 47.3 Z" fill="#8e8e8e"/><path d="M76.6 48.6 L84.8 48.6 L78.7 47.3 L71.6 47.3 Z" fill="#6c6c6c"/><path d="M-6.7 47.3 L0.4 47.3 L4.3 46.3 L-2.0 46.3 Z" fill="#6c6c6c"/><path d="M0.4 47.3 L7.5 47.3 L10.6 46.3 L4.3 46.3 Z" fill="#8e8e8e"/><path d="M7.5 47.3 L14.6 47.3 L17.0 46.3 L10.6 46.3 Z" fill="#6c6c6c"/><path d="M14.6 47.3 L21.8 47.3 L23.3 46.3 L17.0 46.3 Z" fill="#8e8e8e"/><path d="M21.8 47.3 L28.9 47.3 L29.7 46.3 L23.3 46.3 Z" fill="#6c6c6c"/><path d="M28.9 47.3 L36.0 47.3 L36.0 46.3 L29.7 46.3 Z" fill="#8e8e8e"/><path d="M36.0 47.3 L43.1 47.3 L42.3 46.3 L36.0 46.3 Z" fill="#6c6c6c"/><path d="M43.1 47.3 L50.2 47.3 L48.7 46.3 L42.3 46.3 Z" fill="#8e8e8e"/><path d="M50.2 47.3 L57.4 47.3 L55.0 46.3 L48.7 46.3 Z" fill="#6c6c6c"/><path d="M57.4 47.3 L64.5 47.3 L61.4 46.3 L55.0 46.3 Z" fill="#8e8e8e"/><path d="M64.5 47.3 L71.6 47.3 L67.7 46.3 L61.4 46.3 Z" fill="#6c6c6c"/><path d="M71.6 47.3 L78.7 47.3 L74.0 46.3 L67.7 46.3 Z" fill="#8e8e8e"/><path d="M-8.4 46.3 L-2.0 46.3 L1.7 45.5 L-4.0 45.5 Z" fill="#6c6c6c"/><path d="M-2.0 46.3 L4.3 46.3 L7.4 45.5 L1.7 45.5 Z" fill="#8e8e8e"/><path d="M4.3 46.3 L10.6 46.3 L13.1 45.5 L7.4 45.5 Z" fill="#6c6c6c"/><path d="M10.6 46.3 L17.0 46.3 L18.9 45.5 L13.1 45.5 Z" fill="#8e8e8e"/><path d="M17.0 46.3 L23.3 46.3 L24.6 45.5 L18.9 45.5 Z" fill="#6c6c6c"/><path d="M23.3 46.3 L29.7 46.3 L30.3 45.5 L24.6 45.5 Z" fill="#8e8e8e"/><path d="M29.7 46.3 L36.0 46.3 L36.0 45.5 L30.3 45.5 Z" fill="#6c6c6c"/><path d="M36.0 46.3 L42.3 46.3 L41.7 45.5 L36.0 45.5 Z" fill="#8e8e8e"/><path d="M42.3 46.3 L48.7 46.3 L47.4 45.5 L41.7 45.5 Z" fill="#6c6c6c"/><path d="M48.7 46.3 L55.0 46.3 L53.1 45.5 L47.4 45.5 Z" fill="#8e8e8e"/><path d="M55.0 46.3 L61.4 46.3 L58.9 45.5 L53.1 45.5 Z" fill="#6c6c6c"/><path d="M61.4 46.3 L67.7 46.3 L64.6 45.5 L58.9 45.5 Z" fill="#8e8e8e"/><path d="M67.7 46.3 L74.0 46.3 L70.3 45.5 L64.6 45.5 Z" fill="#6c6c6c"/><path d="M74.0 46.3 L80.4 46.3 L76.0 45.5 L70.3 45.5 Z" fill="#8e8e8e"/><path d="M-4.0 45.5 L1.7 45.5 L4.8 44.8 L-0.4 44.8 Z" fill="#8e8e8e"/><path d="M1.7 45.5 L7.4 45.5 L10.0 44.8 L4.8 44.8 Z" fill="#6c6c6c"/><path d="M7.4 45.5 L13.1 45.5 L15.2 44.8 L10.0 44.8 Z" fill="#8e8e8e"/><path d="M13.1 45.5 L18.9 45.5 L20.4 44.8 L15.2 44.8 Z" fill="#6c6c6c"/><path d="M18.9 45.5 L24.6 45.5 L25.6 44.8 L20.4 44.8 Z" fill="#8e8e8e"/><path d="M24.6 45.5 L30.3 45.5 L30.8 44.8 L25.6 44.8 Z" fill="#6c6c6c"/><path d="M30.3 45.5 L36.0 45.5 L36.0 44.8 L30.8 44.8 Z" fill="#8e8e8e"/><path d="M36.0 45.5 L41.7 45.5 L41.2 44.8 L36.0 44.8 Z" fill="#6c6c6c"/><path d="M41.7 45.5 L47.4 45.5 L46.4 44.8 L41.2 44.8 Z" fill="#8e8e8e"/><path d="M47.4 45.5 L53.1 45.5 L51.6 44.8 L46.4 44.8 Z" fill="#6c6c6c"/><path d="M53.1 45.5 L58.9 45.5 L56.8 44.8 L51.6 44.8 Z" fill="#8e8e8e"/><path d="M58.9 45.5 L64.6 45.5 L62.0 44.8 L56.8 44.8 Z" fill="#6c6c6c"/><path d="M64.6 45.5 L70.3 45.5 L67.2 44.8 L62.0 44.8 Z" fill="#8e8e8e"/><path d="M70.3 45.5 L76.0 45.5 L72.4 44.8 L67.2 44.8 Z" fill="#6c6c6c"/><path d="M-5.6 44.8 L-0.4 44.8 L2.6 44.2 L-2.2 44.2 Z" fill="#8e8e8e"/><path d="M-0.4 44.8 L4.8 44.8 L7.4 44.2 L2.6 44.2 Z" fill="#6c6c6c"/><path d="M4.8 44.8 L10.0 44.8 L12.1 44.2 L7.4 44.2 Z" fill="#8e8e8e"/><path d="M10.0 44.8 L15.2 44.8 L16.9 44.2 L12.1 44.2 Z" fill="#6c6c6c"/><path d="M15.2 44.8 L20.4 44.8 L21.7 44.2 L16.9 44.2 Z" fill="#8e8e8e"/><path d="M20.4 44.8 L25.6 44.8 L26.5 44.2 L21.7 44.2 Z" fill="#6c6c6c"/><path d="M25.6 44.8 L30.8 44.8 L31.2 44.2 L26.5 44.2 Z" fill="#8e8e8e"/><path d="M30.8 44.8 L36.0 44.8 L36.0 44.2 L31.2 44.2 Z" fill="#6c6c6c"/><path d="M36.0 44.8 L41.2 44.8 L40.8 44.2 L36.0 44.2 Z" fill="#8e8e8e"/><path d="M41.2 44.8 L46.4 44.8 L45.5 44.2 L40.8 44.2 Z" fill="#6c6c6c"/><path d="M46.4 44.8 L51.6 44.8 L50.3 44.2 L45.5 44.2 Z" fill="#8e8e8e"/><path d="M51.6 44.8 L56.8 44.8 L55.1 44.2 L50.3 44.2 Z" fill="#6c6c6c"/><path d="M56.8 44.8 L62.0 44.8 L59.9 44.2 L55.1 44.2 Z" fill="#8e8e8e"/><path d="M62.0 44.8 L67.2 44.8 L64.6 44.2 L59.9 44.2 Z" fill="#6c6c6c"/><path d="M67.2 44.8 L72.4 44.8 L69.4 44.2 L64.6 44.2 Z" fill="#8e8e8e"/><path d="M72.4 44.8 L77.6 44.8 L74.2 44.2 L69.4 44.2 Z" fill="#6c6c6c"/><path d="M-6.9 44.2 L-2.2 44.2 L0.7 43.8 L-3.7 43.8 Z" fill="#8e8e8e"/><path d="M-2.2 44.2 L2.6 44.2 L5.2 43.8 L0.7 43.8 Z" fill="#6c6c6c"/><path d="M2.6 44.2 L7.4 44.2 L9.6 43.8 L5.2 43.8 Z" fill="#8e8e8e"/><path d="M7.4 44.2 L12.1 44.2 L14.0 43.8 L9.6 43.8 Z" fill="#6c6c6c"/><path d="M12.1 44.2 L16.9 44.2 L18.4 43.8 L14.0 43.8 Z" fill="#8e8e8e"/><path d="M16.9 44.2 L21.7 44.2 L22.8 43.8 L18.4 43.8 Z" fill="#6c6c6c"/><path d="M21.7 44.2 L26.5 44.2 L27.2 43.8 L22.8 43.8 Z" fill="#8e8e8e"/><path d="M26.5 44.2 L31.2 44.2 L31.6 43.8 L27.2 43.8 Z" fill="#6c6c6c"/><path d="M31.2 44.2 L36.0 44.2 L36.0 43.8 L31.6 43.8 Z" fill="#8e8e8e"/><path d="M36.0 44.2 L40.8 44.2 L40.4 43.8 L36.0 43.8 Z" fill="#6c6c6c"/><path d="M40.8 44.2 L45.5 44.2 L44.8 43.8 L40.4 43.8 Z" fill="#8e8e8e"/><path d="M45.5 44.2 L50.3 44.2 L49.2 43.8 L44.8 43.8 Z" fill="#6c6c6c"/><path d="M50.3 44.2 L55.1 44.2 L53.6 43.8 L49.2 43.8 Z" fill="#8e8e8e"/><path d="M55.1 44.2 L59.9 44.2 L58.0 43.8 L53.6 43.8 Z" fill="#6c6c6c"/><path d="M59.9 44.2 L64.6 44.2 L62.4 43.8 L58.0 43.8 Z" fill="#8e8e8e"/><path d="M64.6 44.2 L69.4 44.2 L66.8 43.8 L62.4 43.8 Z" fill="#6c6c6c"/><path d="M69.4 44.2 L74.2 44.2 L71.3 43.8 L66.8 43.8 Z" fill="#8e8e8e"/><path d="M74.2 44.2 L78.9 44.2 L75.7 43.8 L71.3 43.8 Z" fill="#6c6c6c"/><path d="M-3.7 43.8 L0.7 43.8 L3.2 43.4 L-0.9 43.4 Z" fill="#6c6c6c"/><path d="M0.7 43.8 L5.2 43.8 L7.3 43.4 L3.2 43.4 Z" fill="#8e8e8e"/><path d="M5.2 43.8 L9.6 43.8 L11.4 43.4 L7.3 43.4 Z" fill="#6c6c6c"/><path d="M9.6 43.8 L14.0 43.8 L15.5 43.4 L11.4 43.4 Z" fill="#8e8e8e"/><path d="M14.0 43.8 L18.4 43.8 L19.6 43.4 L15.5 43.4 Z" fill="#6c6c6c"/><path d="M18.4 43.8 L22.8 43.8 L23.7 43.4 L19.6 43.4 Z" fill="#8e8e8e"/><path d="M22.8 43.8 L27.2 43.8 L27.8 43.4 L23.7 43.4 Z" fill="#6c6c6c"/><path d="M27.2 43.8 L31.6 43.8 L31.9 43.4 L27.8 43.4 Z" fill="#8e8e8e"/><path d="M31.6 43.8 L36.0 43.8 L36.0 43.4 L31.9 43.4 Z" fill="#6c6c6c"/><path d="M36.0 43.8 L40.4 43.8 L40.1 43.4 L36.0 43.4 Z" fill="#8e8e8e"/><path d="M40.4 43.8 L44.8 43.8 L44.2 43.4 L40.1 43.4 Z" fill="#6c6c6c"/><path d="M44.8 43.8 L49.2 43.8 L48.3 43.4 L44.2 43.4 Z" fill="#8e8e8e"/><path d="M49.2 43.8 L53.6 43.8 L52.4 43.4 L48.3 43.4 Z" fill="#6c6c6c"/><path d="M53.6 43.8 L58.0 43.8 L56.5 43.4 L52.4 43.4 Z" fill="#8e8e8e"/><path d="M58.0 43.8 L62.4 43.8 L60.6 43.4 L56.5 43.4 Z" fill="#6c6c6c"/><path d="M62.4 43.8 L66.8 43.8 L64.7 43.4 L60.6 43.4 Z" fill="#8e8e8e"/><path d="M66.8 43.8 L71.3 43.8 L68.8 43.4 L64.7 43.4 Z" fill="#6c6c6c"/><path d="M71.3 43.8 L75.7 43.8 L72.9 43.4 L68.8 43.4 Z" fill="#8e8e8e"/><path d="M-4.9 43.4 L-0.9 43.4 L1.6 43.0 L-2.2 43.0 Z" fill="#6c6c6c"/><path d="M-0.9 43.4 L3.2 43.4 L5.4 43.0 L1.6 43.0 Z" fill="#8e8e8e"/><path d="M3.2 43.4 L7.3 43.4 L9.2 43.0 L5.4 43.0 Z" fill="#6c6c6c"/><path d="M7.3 43.4 L11.4 43.4 L13.1 43.0 L9.2 43.0 Z" fill="#8e8e8e"/><path d="M11.4 43.4 L15.5 43.4 L16.9 43.0 L13.1 43.0 Z" fill="#6c6c6c"/><path d="M15.5 43.4 L19.6 43.4 L20.7 43.0 L16.9 43.0 Z" fill="#8e8e8e"/><path d="M19.6 43.4 L23.7 43.4 L24.5 43.0 L20.7 43.0 Z" fill="#6c6c6c"/><path d="M23.7 43.4 L27.8 43.4 L28.4 43.0 L24.5 43.0 Z" fill="#8e8e8e"/><path d="M27.8 43.4 L31.9 43.4 L32.2 43.0 L28.4 43.0 Z" fill="#6c6c6c"/><path d="M31.9 43.4 L36.0 43.4 L36.0 43.0 L32.2 43.0 Z" fill="#8e8e8e"/><path d="M36.0 43.4 L40.1 43.4 L39.8 43.0 L36.0 43.0 Z" fill="#6c6c6c"/><path d="M40.1 43.4 L44.2 43.4 L43.6 43.0 L39.8 43.0 Z" fill="#8e8e8e"/><path d="M44.2 43.4 L48.3 43.4 L47.5 43.0 L43.6 43.0 Z" fill="#6c6c6c"/><path d="M48.3 43.4 L52.4 43.4 L51.3 43.0 L47.5 43.0 Z" fill="#8e8e8e"/><path d="M52.4 43.4 L56.5 43.4 L55.1 43.0 L51.3 43.0 Z" fill="#6c6c6c"/><path d="M56.5 43.4 L60.6 43.4 L58.9 43.0 L55.1 43.0 Z" fill="#8e8e8e"/><path d="M60.6 43.4 L64.7 43.4 L62.8 43.0 L58.9 43.0 Z" fill="#6c6c6c"/><path d="M64.7 43.4 L68.8 43.4 L66.6 43.0 L62.8 43.0 Z" fill="#8e8e8e"/><path d="M68.8 43.4 L72.9 43.4 L70.4 43.0 L66.6 43.0 Z" fill="#6c6c6c"/><path d="M72.9 43.4 L76.9 43.4 L74.2 43.0 L70.4 43.0 Z" fill="#8e8e8e"/><path d="M-6.1 43.0 L-2.2 43.0 L0.1 42.7 L-3.4 42.7 Z" fill="#6c6c6c"/><path d="M-2.2 43.0 L1.6 43.0 L3.7 42.7 L0.1 42.7 Z" fill="#8e8e8e"/><path d="M1.6 43.0 L5.4 43.0 L7.3 42.7 L3.7 42.7 Z" fill="#6c6c6c"/><path d="M5.4 43.0 L9.2 43.0 L10.9 42.7 L7.3 42.7 Z" fill="#8e8e8e"/><path d="M9.2 43.0 L13.1 43.0 L14.5 42.7 L10.9 42.7 Z" fill="#6c6c6c"/><path d="M13.1 43.0 L16.9 43.0 L18.1 42.7 L14.5 42.7 Z" fill="#8e8e8e"/><path d="M16.9 43.0 L20.7 43.0 L21.7 42.7 L18.1 42.7 Z" fill="#6c6c6c"/><path d="M20.7 43.0 L24.5 43.0 L25.2 42.7 L21.7 42.7 Z" fill="#8e8e8e"/><path d="M24.5 43.0 L28.4 43.0 L28.8 42.7 L25.2 42.7 Z" fill="#6c6c6c"/><path d="M28.4 43.0 L32.2 43.0 L32.4 42.7 L28.8 42.7 Z" fill="#8e8e8e"/><path d="M32.2 43.0 L36.0 43.0 L36.0 42.7 L32.4 42.7 Z" fill="#6c6c6c"/><path d="M36.0 43.0 L39.8 43.0 L39.6 42.7 L36.0 42.7 Z" fill="#8e8e8e"/><path d="M39.8 43.0 L43.6 43.0 L43.2 42.7 L39.6 42.7 Z" fill="#6c6c6c"/><path d="M43.6 43.0 L47.5 43.0 L46.8 42.7 L43.2 42.7 Z" fill="#8e8e8e"/><path d="M47.5 43.0 L51.3 43.0 L50.3 42.7 L46.8 42.7 Z" fill="#6c6c6c"/><path d="M51.3 43.0 L55.1 43.0 L53.9 42.7 L50.3 42.7 Z" fill="#8e8e8e"/><path d="M55.1 43.0 L58.9 43.0 L57.5 42.7 L53.9 42.7 Z" fill="#6c6c6c"/><path d="M58.9 43.0 L62.8 43.0 L61.1 42.7 L57.5 42.7 Z" fill="#8e8e8e"/><path d="M62.8 43.0 L66.6 43.0 L64.7 42.7 L61.1 42.7 Z" fill="#6c6c6c"/><path d="M66.6 43.0 L70.4 43.0 L68.3 42.7 L64.7 42.7 Z" fill="#8e8e8e"/><path d="M70.4 43.0 L74.2 43.0 L71.9 42.7 L68.3 42.7 Z" fill="#6c6c6c"/><path d="M74.2 43.0 L78.1 43.0 L75.4 42.7 L71.9 42.7 Z" fill="#8e8e8e"/><path d="M-3.4 42.7 L0.1 42.7 L2.2 42.4 L-1.1 42.4 Z" fill="#8e8e8e"/><path d="M0.1 42.7 L3.7 42.7 L5.6 42.4 L2.2 42.4 Z" fill="#6c6c6c"/><path d="M3.7 42.7 L7.3 42.7 L9.0 42.4 L5.6 42.4 Z" fill="#8e8e8e"/><path d="M7.3 42.7 L10.9 42.7 L12.4 42.4 L9.0 42.4 Z" fill="#6c6c6c"/><path d="M10.9 42.7 L14.5 42.7 L15.7 42.4 L12.4 42.4 Z" fill="#8e8e8e"/><path d="M14.5 42.7 L18.1 42.7 L19.1 42.4 L15.7 42.4 Z" fill="#6c6c6c"/><path d="M18.1 42.7 L21.7 42.7 L22.5 42.4 L19.1 42.4 Z" fill="#8e8e8e"/><path d="M21.7 42.7 L25.2 42.7 L25.9 42.4 L22.5 42.4 Z" fill="#6c6c6c"/><path d="M25.2 42.7 L28.8 42.7 L29.2 42.4 L25.9 42.4 Z" fill="#8e8e8e"/><path d="M28.8 42.7 L32.4 42.7 L32.6 42.4 L29.2 42.4 Z" fill="#6c6c6c"/><path d="M32.4 42.7 L36.0 42.7 L36.0 42.4 L32.6 42.4 Z" fill="#8e8e8e"/><path d="M36.0 42.7 L39.6 42.7 L39.4 42.4 L36.0 42.4 Z" fill="#6c6c6c"/><path d="M39.6 42.7 L43.2 42.7 L42.8 42.4 L39.4 42.4 Z" fill="#8e8e8e"/><path d="M43.2 42.7 L46.8 42.7 L46.1 42.4 L42.8 42.4 Z" fill="#6c6c6c"/><path d="M46.8 42.7 L50.3 42.7 L49.5 42.4 L46.1 42.4 Z" fill="#8e8e8e"/><path d="M50.3 42.7 L53.9 42.7 L52.9 42.4 L49.5 42.4 Z" fill="#6c6c6c"/><path d="M53.9 42.7 L57.5 42.7 L56.3 42.4 L52.9 42.4 Z" fill="#8e8e8e"/><path d="M57.5 42.7 L61.1 42.7 L59.6 42.4 L56.3 42.4 Z" fill="#6c6c6c"/><path d="M61.1 42.7 L64.7 42.7 L63.0 42.4 L59.6 42.4 Z" fill="#8e8e8e"/><path d="M64.7 42.7 L68.3 42.7 L66.4 42.4 L63.0 42.4 Z" fill="#6c6c6c"/><path d="M68.3 42.7 L71.9 42.7 L69.8 42.4 L66.4 42.4 Z" fill="#8e8e8e"/><path d="M71.9 42.7 L75.4 42.7 L73.1 42.4 L69.8 42.4 Z" fill="#6c6c6c"/>
</g>
<circle cx="36" cy="36" r="31" fill="#000"/>
</svg>
<svg class="b" style="left:445px;top:400px" width="18" height="17">
<circle cx="8" cy="8" r="6.8" fill="#626262"/>
<text x="8" y="12" text-anchor="middle" font-family="Liberation Sans" font-weight="bold" font-size="11.5" fill="#1d1d1d" stroke="#1d1d1d" stroke-width="0.5">S</text></svg>
<svg class="b" style="left:469px;top:402px" width="12" height="12">
<rect x="0" y="0" width="12" height="12" rx="2" fill="#cccccc"/>
<path d="M1.8 9.8 L3.9 6.8 L5.3 8.3 L7.4 5.6 L10.4 9.8 Z" fill="#1d1d1d"/></svg>
<svg class="b" style="left:553px;top:402px" width="12" height="12">
<rect x="0" y="0" width="12" height="12" rx="2.5" fill="#d2d2d2"/>
<rect x="0" y="3.1" width="12" height="1.4" fill="#4a4a4a"/><rect x="0" y="7.2" width="12" height="1.4" fill="#4a4a4a"/></svg>
<div class="b" style="left:450px;top:420px;width:112px;height:4px;background:#787878;border-radius:2px;"></div>
<div class="t" style="left:512.3px;top:432.19px;font-size:11px;line-height:14px;color:#c0c0c0;font-weight:normal;font-style:normal;letter-spacing:-0.1px;font-family:'Liberation Sans', sans-serif;">Out Color</div>
<div class="t" style="left:678.5px;top:218.15px;font-size:14px;line-height:18px;color:#8a8a8a;font-weight:normal;font-style:normal;letter-spacing:0px;font-family:'Liberation Sans', sans-serif;">Material</div>
<svg class="b" style="left:653px;top:237px" width="26" height="22"><text x="3" y="13.2" font-family="Liberation Serif" font-style="italic" font-size="15" letter-spacing="0.6" fill="#a0a0a0" stroke="#a0a0a0" stroke-width="0.2">f:x</text></svg>
<div class="t" style="left:678.5px;top:238.15px;font-size:14px;line-height:18px;color:#d0d0d0;font-weight:normal;font-style:normal;letter-spacing:-0.35px;font-family:'Liberation Sans', sans-serif;">RS Material</div>
<div class="b" style="left:654px;top:258px;width:128px;height:204px;background:#1d1d1d;border-radius:8px;box-shadow:0 0 1.5px rgba(0,0,0,0.45);"></div>
<svg class="b" style="left:682px;top:266px" width="72" height="72" viewBox="0 0 72 72">
<defs>
<pattern id="chk682" width="19.2" height="19.2" patternUnits="userSpaceOnUse" x="-2.5" y="-5.8">
<rect width="19.2" height="19.2" fill="#9a9a9a"/><rect width="9.6" height="9.6" fill="#747474"/><rect x="9.6" y="9.6" width="9.6" height="9.6" fill="#747474"/></pattern>
<clipPath id="cl682"><rect width="72" height="72"/></clipPath>
</defs>
<g clip-path="url(#cl682)">
<rect width="72" height="72" fill="url(#chk682)"/>
<rect y="38" width="72" height="8" fill="#7e7e7e"/>
<path d="M-18.7 73.8 L8.6 73.8 L17.4 62.3 L-1.1 62.3 Z" fill="#6c6c6c"/><path d="M8.6 73.8 L36.0 73.8 L36.0 62.3 L17.4 62.3 Z" fill="#8e8e8e"/><path d="M36.0 73.8 L63.4 73.8 L54.6 62.3 L36.0 62.3 Z" fill="#6c6c6c"/><path d="M63.4 73.8 L90.7 73.8 L73.1 62.3 L54.6 62.3 Z" fill="#8e8e8e"/><path d="M-19.7 62.3 L-1.1 62.3 L7.9 56.4 L-6.2 56.4 Z" fill="#6c6c6c"/><path d="M-1.1 62.3 L17.4 62.3 L21.9 56.4 L7.9 56.4 Z" fill="#8e8e8e"/><path d="M17.4 62.3 L36.0 62.3 L36.0 56.4 L21.9 56.4 Z" fill="#6c6c6c"/><path d="M36.0 62.3 L54.6 62.3 L50.1 56.4 L36.0 56.4 Z" fill="#8e8e8e"/><path d="M54.6 62.3 L73.1 62.3 L64.1 56.4 L50.1 56.4 Z" fill="#6c6c6c"/><path d="M73.1 62.3 L91.7 62.3 L78.2 56.4 L64.1 56.4 Z" fill="#8e8e8e"/><path d="M-20.2 56.4 L-6.2 56.4 L2.1 52.8 L-9.2 52.8 Z" fill="#6c6c6c"/><path d="M-6.2 56.4 L7.9 56.4 L13.4 52.8 L2.1 52.8 Z" fill="#8e8e8e"/><path d="M7.9 56.4 L21.9 56.4 L24.7 52.8 L13.4 52.8 Z" fill="#6c6c6c"/><path d="M21.9 56.4 L36.0 56.4 L36.0 52.8 L24.7 52.8 Z" fill="#8e8e8e"/><path d="M36.0 56.4 L50.1 56.4 L47.3 52.8 L36.0 52.8 Z" fill="#6c6c6c"/><path d="M50.1 56.4 L64.1 56.4 L58.6 52.8 L47.3 52.8 Z" fill="#8e8e8e"/><path d="M64.1 56.4 L78.2 56.4 L69.9 52.8 L58.6 52.8 Z" fill="#6c6c6c"/><path d="M78.2 56.4 L92.2 56.4 L81.2 52.8 L69.9 52.8 Z" fill="#8e8e8e"/><path d="M-9.2 52.8 L2.1 52.8 L7.6 50.4 L-1.8 50.4 Z" fill="#8e8e8e"/><path d="M2.1 52.8 L13.4 52.8 L17.1 50.4 L7.6 50.4 Z" fill="#6c6c6c"/><path d="M13.4 52.8 L24.7 52.8 L26.5 50.4 L17.1 50.4 Z" fill="#8e8e8e"/><path d="M24.7 52.8 L36.0 52.8 L36.0 50.4 L26.5 50.4 Z" fill="#6c6c6c"/><path d="M36.0 52.8 L47.3 52.8 L45.5 50.4 L36.0 50.4 Z" fill="#8e8e8e"/><path d="M47.3 52.8 L58.6 52.8 L54.9 50.4 L45.5 50.4 Z" fill="#6c6c6c"/><path d="M58.6 52.8 L69.9 52.8 L64.4 50.4 L54.9 50.4 Z" fill="#8e8e8e"/><path d="M69.9 52.8 L81.2 52.8 L73.8 50.4 L64.4 50.4 Z" fill="#6c6c6c"/><path d="M-11.3 50.4 L-1.8 50.4 L3.5 48.6 L-4.6 48.6 Z" fill="#8e8e8e"/><path d="M-1.8 50.4 L7.6 50.4 L11.6 48.6 L3.5 48.6 Z" fill="#6c6c6c"/><path d="M7.6 50.4 L17.1 50.4 L19.8 48.6 L11.6 48.6 Z" fill="#8e8e8e"/><path d="M17.1 50.4 L26.5 50.4 L27.9 48.6 L19.8 48.6 Z" fill="#6c6c6c"/><path d="M26.5 50.4 L36.0 50.4 L36.0 48.6 L27.9 48.6 Z" fill="#8e8e8e"/><path d="M36.0 50.4 L45.5 50.4 L44.1 48.6 L36.0 48.6 Z" fill="#6c6c6c"/><path d="M45.5 50.4 L54.9 50.4 L52.2 48.6 L44.1 48.6 Z" fill="#8e8e8e"/><path d="M54.9 50.4 L64.4 50.4 L60.4 48.6 L52.2 48.6 Z" fill="#6c6c6c"/><path d="M64.4 50.4 L73.8 50.4 L68.5 48.6 L60.4 48.6 Z" fill="#8e8e8e"/><path d="M73.8 50.4 L83.3 50.4 L76.6 48.6 L68.5 48.6 Z" fill="#6c6c6c"/><path d="M-12.8 48.6 L-4.6 48.6 L0.4 47.3 L-6.7 47.3 Z" fill="#8e8e8e"/><path d="M-4.6 48.6 L3.5 48.6 L7.5 47.3 L0.4 47.3 Z" fill="#6c6c6c"/><path d="M3.5 48.6 L11.6 48.6 L14.6 47.3 L7.5 47.3 Z" fill="#8e8e8e"/><path d="M11.6 48.6 L19.8 48.6 L21.8 47.3 L14.6 47.3 Z" fill="#6c6c6c"/><path d="M19.8 48.6 L27.9 48.6 L28.9 47.3 L21.8 47.3 Z" fill="#8e8e8e"/><path d="M27.9 48.6 L36.0 48.6 L36.0 47.3 L28.9 47.3 Z" fill="#6c6c6c"/><path d="M36.0 48.6 L44.1 48.6 L43.1 47.3 L36.0 47.3 Z" fill="#8e8e8e"/><path d="M44.1 48.6 L52.2 48.6 L50.2 47.3 L43.1 47.3 Z" fill="#6c6c6c"/><path d="M52.2 48.6 L60.4 48.6 L57.4 47.3 L50.2 47.3 Z" fill="#8e8e8e"/><path d="M60.4 48.6 L68.5 48.6 L64.5 47.3 L57.4 47.3 Z" fill="#6c6c6c"/><path d="M68.5 48.6 L76.6 48.6 L71.6 47.3 L64.5 47.3 Z" fill="#8e8e8e"/><path d="M76.6 48.6 L84.8 48.6 L78.7 47.3 L71.6 47.3 Z" fill="#6c6c6c"/><path d="M-6.7 47.3 L0.4 47.3 L4.3 46.3 L-2.0 46.3 Z" fill="#6c6c6c"/><path d="M0.4 47.3 L7.5 47.3 L10.6 46.3 L4.3 46.3 Z" fill="#8e8e8e"/><path d="M7.5 47.3 L14.6 47.3 L17.0 46.3 L10.6 46.3 Z" fill="#6c6c6c"/><path d="M14.6 47.3 L21.8 47.3 L23.3 46.3 L17.0 46.3 Z" fill="#8e8e8e"/><path d="M21.8 47.3 L28.9 47.3 L29.7 46.3 L23.3 46.3 Z" fill="#6c6c6c"/><path d="M28.9 47.3 L36.0 47.3 L36.0 46.3 L29.7 46.3 Z" fill="#8e8e8e"/><path d="M36.0 47.3 L43.1 47.3 L42.3 46.3 L36.0 46.3 Z" fill="#6c6c6c"/><path d="M43.1 47.3 L50.2 47.3 L48.7 46.3 L42.3 46.3 Z" fill="#8e8e8e"/><path d="M50.2 47.3 L57.4 47.3 L55.0 46.3 L48.7 46.3 Z" fill="#6c6c6c"/><path d="M57.4 47.3 L64.5 47.3 L61.4 46.3 L55.0 46.3 Z" fill="#8e8e8e"/><path d="M64.5 47.3 L71.6 47.3 L67.7 46.3 L61.4 46.3 Z" fill="#6c6c6c"/><path d="M71.6 47.3 L78.7 47.3 L74.0 46.3 L67.7 46.3 Z" fill="#8e8e8e"/><path d="M-8.4 46.3 L-2.0 46.3 L1.7 45.5 L-4.0 45.5 Z" fill="#6c6c6c"/><path d="M-2.0 46.3 L4.3 46.3 L7.4 45.5 L1.7 45.5 Z" fill="#8e8e8e"/><path d="M4.3 46.3 L10.6 46.3 L13.1 45.5 L7.4 45.5 Z" fill="#6c6c6c"/><path d="M10.6 46.3 L17.0 46.3 L18.9 45.5 L13.1 45.5 Z" fill="#8e8e8e"/><path d="M17.0 46.3 L23.3 46.3 L24.6 45.5 L18.9 45.5 Z" fill="#6c6c6c"/><path d="M23.3 46.3 L29.7 46.3 L30.3 45.5 L24.6 45.5 Z" fill="#8e8e8e"/><path d="M29.7 46.3 L36.0 46.3 L36.0 45.5 L30.3 45.5 Z" fill="#6c6c6c"/><path d="M36.0 46.3 L42.3 46.3 L41.7 45.5 L36.0 45.5 Z" fill="#8e8e8e"/><path d="M42.3 46.3 L48.7 46.3 L47.4 45.5 L41.7 45.5 Z" fill="#6c6c6c"/><path d="M48.7 46.3 L55.0 46.3 L53.1 45.5 L47.4 45.5 Z" fill="#8e8e8e"/><path d="M55.0 46.3 L61.4 46.3 L58.9 45.5 L53.1 45.5 Z" fill="#6c6c6c"/><path d="M61.4 46.3 L67.7 46.3 L64.6 45.5 L58.9 45.5 Z" fill="#8e8e8e"/><path d="M67.7 46.3 L74.0 46.3 L70.3 45.5 L64.6 45.5 Z" fill="#6c6c6c"/><path d="M74.0 46.3 L80.4 46.3 L76.0 45.5 L70.3 45.5 Z" fill="#8e8e8e"/><path d="M-4.0 45.5 L1.7 45.5 L4.8 44.8 L-0.4 44.8 Z" fill="#8e8e8e"/><path d="M1.7 45.5 L7.4 45.5 L10.0 44.8 L4.8 44.8 Z" fill="#6c6c6c"/><path d="M7.4 45.5 L13.1 45.5 L15.2 44.8 L10.0 44.8 Z" fill="#8e8e8e"/><path d="M13.1 45.5 L18.9 45.5 L20.4 44.8 L15.2 44.8 Z" fill="#6c6c6c"/><path d="M18.9 45.5 L24.6 45.5 L25.6 44.8 L20.4 44.8 Z" fill="#8e8e8e"/><path d="M24.6 45.5 L30.3 45.5 L30.8 44.8 L25.6 44.8 Z" fill="#6c6c6c"/><path d="M30.3 45.5 L36.0 45.5 L36.0 44.8 L30.8 44.8 Z" fill="#8e8e8e"/><path d="M36.0 45.5 L41.7 45.5 L41.2 44.8 L36.0 44.8 Z" fill="#6c6c6c"/><path d="M41.7 45.5 L47.4 45.5 L46.4 44.8 L41.2 44.8 Z" fill="#8e8e8e"/><path d="M47.4 45.5 L53.1 45.5 L51.6 44.8 L46.4 44.8 Z" fill="#6c6c6c"/><path d="M53.1 45.5 L58.9 45.5 L56.8 44.8 L51.6 44.8 Z" fill="#8e8e8e"/><path d="M58.9 45.5 L64.6 45.5 L62.0 44.8 L56.8 44.8 Z" fill="#6c6c6c"/><path d="M64.6 45.5 L70.3 45.5 L67.2 44.8 L62.0 44.8 Z" fill="#8e8e8e"/><path d="M70.3 45.5 L76.0 45.5 L72.4 44.8 L67.2 44.8 Z" fill="#6c6c6c"/><path d="M-5.6 44.8 L-0.4 44.8 L2.6 44.2 L-2.2 44.2 Z" fill="#8e8e8e"/><path d="M-0.4 44.8 L4.8 44.8 L7.4 44.2 L2.6 44.2 Z" fill="#6c6c6c"/><path d="M4.8 44.8 L10.0 44.8 L12.1 44.2 L7.4 44.2 Z" fill="#8e8e8e"/><path d="M10.0 44.8 L15.2 44.8 L16.9 44.2 L12.1 44.2 Z" fill="#6c6c6c"/><path d="M15.2 44.8 L20.4 44.8 L21.7 44.2 L16.9 44.2 Z" fill="#8e8e8e"/><path d="M20.4 44.8 L25.6 44.8 L26.5 44.2 L21.7 44.2 Z" fill="#6c6c6c"/><path d="M25.6 44.8 L30.8 44.8 L31.2 44.2 L26.5 44.2 Z" fill="#8e8e8e"/><path d="M30.8 44.8 L36.0 44.8 L36.0 44.2 L31.2 44.2 Z" fill="#6c6c6c"/><path d="M36.0 44.8 L41.2 44.8 L40.8 44.2 L36.0 44.2 Z" fill="#8e8e8e"/><path d="M41.2 44.8 L46.4 44.8 L45.5 44.2 L40.8 44.2 Z" fill="#6c6c6c"/><path d="M46.4 44.8 L51.6 44.8 L50.3 44.2 L45.5 44.2 Z" fill="#8e8e8e"/><path d="M51.6 44.8 L56.8 44.8 L55.1 44.2 L50.3 44.2 Z" fill="#6c6c6c"/><path d="M56.8 44.8 L62.0 44.8 L59.9 44.2 L55.1 44.2 Z" fill="#8e8e8e"/><path d="M62.0 44.8 L67.2 44.8 L64.6 44.2 L59.9 44.2 Z" fill="#6c6c6c"/><path d="M67.2 44.8 L72.4 44.8 L69.4 44.2 L64.6 44.2 Z" fill="#8e8e8e"/><path d="M72.4 44.8 L77.6 44.8 L74.2 44.2 L69.4 44.2 Z" fill="#6c6c6c"/><path d="M-6.9 44.2 L-2.2 44.2 L0.7 43.8 L-3.7 43.8 Z" fill="#8e8e8e"/><path d="M-2.2 44.2 L2.6 44.2 L5.2 43.8 L0.7 43.8 Z" fill="#6c6c6c"/><path d="M2.6 44.2 L7.4 44.2 L9.6 43.8 L5.2 43.8 Z" fill="#8e8e8e"/><path d="M7.4 44.2 L12.1 44.2 L14.0 43.8 L9.6 43.8 Z" fill="#6c6c6c"/><path d="M12.1 44.2 L16.9 44.2 L18.4 43.8 L14.0 43.8 Z" fill="#8e8e8e"/><path d="M16.9 44.2 L21.7 44.2 L22.8 43.8 L18.4 43.8 Z" fill="#6c6c6c"/><path d="M21.7 44.2 L26.5 44.2 L27.2 43.8 L22.8 43.8 Z" fill="#8e8e8e"/><path d="M26.5 44.2 L31.2 44.2 L31.6 43.8 L27.2 43.8 Z" fill="#6c6c6c"/><path d="M31.2 44.2 L36.0 44.2 L36.0 43.8 L31.6 43.8 Z" fill="#8e8e8e"/><path d="M36.0 44.2 L40.8 44.2 L40.4 43.8 L36.0 43.8 Z" fill="#6c6c6c"/><path d="M40.8 44.2 L45.5 44.2 L44.8 43.8 L40.4 43.8 Z" fill="#8e8e8e"/><path d="M45.5 44.2 L50.3 44.2 L49.2 43.8 L44.8 43.8 Z" fill="#6c6c6c"/><path d="M50.3 44.2 L55.1 44.2 L53.6 43.8 L49.2 43.8 Z" fill="#8e8e8e"/><path d="M55.1 44.2 L59.9 44.2 L58.0 43.8 L53.6 43.8 Z" fill="#6c6c6c"/><path d="M59.9 44.2 L64.6 44.2 L62.4 43.8 L58.0 43.8 Z" fill="#8e8e8e"/><path d="M64.6 44.2 L69.4 44.2 L66.8 43.8 L62.4 43.8 Z" fill="#6c6c6c"/><path d="M69.4 44.2 L74.2 44.2 L71.3 43.8 L66.8 43.8 Z" fill="#8e8e8e"/><path d="M74.2 44.2 L78.9 44.2 L75.7 43.8 L71.3 43.8 Z" fill="#6c6c6c"/><path d="M-3.7 43.8 L0.7 43.8 L3.2 43.4 L-0.9 43.4 Z" fill="#6c6c6c"/><path d="M0.7 43.8 L5.2 43.8 L7.3 43.4 L3.2 43.4 Z" fill="#8e8e8e"/><path d="M5.2 43.8 L9.6 43.8 L11.4 43.4 L7.3 43.4 Z" fill="#6c6c6c"/><path d="M9.6 43.8 L14.0 43.8 L15.5 43.4 L11.4 43.4 Z" fill="#8e8e8e"/><path d="M14.0 43.8 L18.4 43.8 L19.6 43.4 L15.5 43.4 Z" fill="#6c6c6c"/><path d="M18.4 43.8 L22.8 43.8 L23.7 43.4 L19.6 43.4 Z" fill="#8e8e8e"/><path d="M22.8 43.8 L27.2 43.8 L27.8 43.4 L23.7 43.4 Z" fill="#6c6c6c"/><path d="M27.2 43.8 L31.6 43.8 L31.9 43.4 L27.8 43.4 Z" fill="#8e8e8e"/><path d="M31.6 43.8 L36.0 43.8 L36.0 43.4 L31.9 43.4 Z" fill="#6c6c6c"/><path d="M36.0 43.8 L40.4 43.8 L40.1 43.4 L36.0 43.4 Z" fill="#8e8e8e"/><path d="M40.4 43.8 L44.8 43.8 L44.2 43.4 L40.1 43.4 Z" fill="#6c6c6c"/><path d="M44.8 43.8 L49.2 43.8 L48.3 43.4 L44.2 43.4 Z" fill="#8e8e8e"/><path d="M49.2 43.8 L53.6 43.8 L52.4 43.4 L48.3 43.4 Z" fill="#6c6c6c"/><path d="M53.6 43.8 L58.0 43.8 L56.5 43.4 L52.4 43.4 Z" fill="#8e8e8e"/><path d="M58.0 43.8 L62.4 43.8 L60.6 43.4 L56.5 43.4 Z" fill="#6c6c6c"/><path d="M62.4 43.8 L66.8 43.8 L64.7 43.4 L60.6 43.4 Z" fill="#8e8e8e"/><path d="M66.8 43.8 L71.3 43.8 L68.8 43.4 L64.7 43.4 Z" fill="#6c6c6c"/><path d="M71.3 43.8 L75.7 43.8 L72.9 43.4 L68.8 43.4 Z" fill="#8e8e8e"/><path d="M-4.9 43.4 L-0.9 43.4 L1.6 43.0 L-2.2 43.0 Z" fill="#6c6c6c"/><path d="M-0.9 43.4 L3.2 43.4 L5.4 43.0 L1.6 43.0 Z" fill="#8e8e8e"/><path d="M3.2 43.4 L7.3 43.4 L9.2 43.0 L5.4 43.0 Z" fill="#6c6c6c"/><path d="M7.3 43.4 L11.4 43.4 L13.1 43.0 L9.2 43.0 Z" fill="#8e8e8e"/><path d="M11.4 43.4 L15.5 43.4 L16.9 43.0 L13.1 43.0 Z" fill="#6c6c6c"/><path d="M15.5 43.4 L19.6 43.4 L20.7 43.0 L16.9 43.0 Z" fill="#8e8e8e"/><path d="M19.6 43.4 L23.7 43.4 L24.5 43.0 L20.7 43.0 Z" fill="#6c6c6c"/><path d="M23.7 43.4 L27.8 43.4 L28.4 43.0 L24.5 43.0 Z" fill="#8e8e8e"/><path d="M27.8 43.4 L31.9 43.4 L32.2 43.0 L28.4 43.0 Z" fill="#6c6c6c"/><path d="M31.9 43.4 L36.0 43.4 L36.0 43.0 L32.2 43.0 Z" fill="#8e8e8e"/><path d="M36.0 43.4 L40.1 43.4 L39.8 43.0 L36.0 43.0 Z" fill="#6c6c6c"/><path d="M40.1 43.4 L44.2 43.4 L43.6 43.0 L39.8 43.0 Z" fill="#8e8e8e"/><path d="M44.2 43.4 L48.3 43.4 L47.5 43.0 L43.6 43.0 Z" fill="#6c6c6c"/><path d="M48.3 43.4 L52.4 43.4 L51.3 43.0 L47.5 43.0 Z" fill="#8e8e8e"/><path d="M52.4 43.4 L56.5 43.4 L55.1 43.0 L51.3 43.0 Z" fill="#6c6c6c"/><path d="M56.5 43.4 L60.6 43.4 L58.9 43.0 L55.1 43.0 Z" fill="#8e8e8e"/><path d="M60.6 43.4 L64.7 43.4 L62.8 43.0 L58.9 43.0 Z" fill="#6c6c6c"/><path d="M64.7 43.4 L68.8 43.4 L66.6 43.0 L62.8 43.0 Z" fill="#8e8e8e"/><path d="M68.8 43.4 L72.9 43.4 L70.4 43.0 L66.6 43.0 Z" fill="#6c6c6c"/><path d="M72.9 43.4 L76.9 43.4 L74.2 43.0 L70.4 43.0 Z" fill="#8e8e8e"/><path d="M-6.1 43.0 L-2.2 43.0 L0.1 42.7 L-3.4 42.7 Z" fill="#6c6c6c"/><path d="M-2.2 43.0 L1.6 43.0 L3.7 42.7 L0.1 42.7 Z" fill="#8e8e8e"/><path d="M1.6 43.0 L5.4 43.0 L7.3 42.7 L3.7 42.7 Z" fill="#6c6c6c"/><path d="M5.4 43.0 L9.2 43.0 L10.9 42.7 L7.3 42.7 Z" fill="#8e8e8e"/><path d="M9.2 43.0 L13.1 43.0 L14.5 42.7 L10.9 42.7 Z" fill="#6c6c6c"/><path d="M13.1 43.0 L16.9 43.0 L18.1 42.7 L14.5 42.7 Z" fill="#8e8e8e"/><path d="M16.9 43.0 L20.7 43.0 L21.7 42.7 L18.1 42.7 Z" fill="#6c6c6c"/><path d="M20.7 43.0 L24.5 43.0 L25.2 42.7 L21.7 42.7 Z" fill="#8e8e8e"/><path d="M24.5 43.0 L28.4 43.0 L28.8 42.7 L25.2 42.7 Z" fill="#6c6c6c"/><path d="M28.4 43.0 L32.2 43.0 L32.4 42.7 L28.8 42.7 Z" fill="#8e8e8e"/><path d="M32.2 43.0 L36.0 43.0 L36.0 42.7 L32.4 42.7 Z" fill="#6c6c6c"/><path d="M36.0 43.0 L39.8 43.0 L39.6 42.7 L36.0 42.7 Z" fill="#8e8e8e"/><path d="M39.8 43.0 L43.6 43.0 L43.2 42.7 L39.6 42.7 Z" fill="#6c6c6c"/><path d="M43.6 43.0 L47.5 43.0 L46.8 42.7 L43.2 42.7 Z" fill="#8e8e8e"/><path d="M47.5 43.0 L51.3 43.0 L50.3 42.7 L46.8 42.7 Z" fill="#6c6c6c"/><path d="M51.3 43.0 L55.1 43.0 L53.9 42.7 L50.3 42.7 Z" fill="#8e8e8e"/><path d="M55.1 43.0 L58.9 43.0 L57.5 42.7 L53.9 42.7 Z" fill="#6c6c6c"/><path d="M58.9 43.0 L62.8 43.0 L61.1 42.7 L57.5 42.7 Z" fill="#8e8e8e"/><path d="M62.8 43.0 L66.6 43.0 L64.7 42.7 L61.1 42.7 Z" fill="#6c6c6c"/><path d="M66.6 43.0 L70.4 43.0 L68.3 42.7 L64.7 42.7 Z" fill="#8e8e8e"/><path d="M70.4 43.0 L74.2 43.0 L71.9 42.7 L68.3 42.7 Z" fill="#6c6c6c"/><path d="M74.2 43.0 L78.1 43.0 L75.4 42.7 L71.9 42.7 Z" fill="#8e8e8e"/><path d="M-3.4 42.7 L0.1 42.7 L2.2 42.4 L-1.1 42.4 Z" fill="#8e8e8e"/><path d="M0.1 42.7 L3.7 42.7 L5.6 42.4 L2.2 42.4 Z" fill="#6c6c6c"/><path d="M3.7 42.7 L7.3 42.7 L9.0 42.4 L5.6 42.4 Z" fill="#8e8e8e"/><path d="M7.3 42.7 L10.9 42.7 L12.4 42.4 L9.0 42.4 Z" fill="#6c6c6c"/><path d="M10.9 42.7 L14.5 42.7 L15.7 42.4 L12.4 42.4 Z" fill="#8e8e8e"/><path d="M14.5 42.7 L18.1 42.7 L19.1 42.4 L15.7 42.4 Z" fill="#6c6c6c"/><path d="M18.1 42.7 L21.7 42.7 L22.5 42.4 L19.1 42.4 Z" fill="#8e8e8e"/><path d="M21.7 42.7 L25.2 42.7 L25.9 42.4 L22.5 42.4 Z" fill="#6c6c6c"/><path d="M25.2 42.7 L28.8 42.7 L29.2 42.4 L25.9 42.4 Z" fill="#8e8e8e"/><path d="M28.8 42.7 L32.4 42.7 L32.6 42.4 L29.2 42.4 Z" fill="#6c6c6c"/><path d="M32.4 42.7 L36.0 42.7 L36.0 42.4 L32.6 42.4 Z" fill="#8e8e8e"/><path d="M36.0 42.7 L39.6 42.7 L39.4 42.4 L36.0 42.4 Z" fill="#6c6c6c"/><path d="M39.6 42.7 L43.2 42.7 L42.8 42.4 L39.4 42.4 Z" fill="#8e8e8e"/><path d="M43.2 42.7 L46.8 42.7 L46.1 42.4 L42.8 42.4 Z" fill="#6c6c6c"/><path d="M46.8 42.7 L50.3 42.7 L49.5 42.4 L46.1 42.4 Z" fill="#8e8e8e"/><path d="M50.3 42.7 L53.9 42.7 L52.9 42.4 L49.5 42.4 Z" fill="#6c6c6c"/><path d="M53.9 42.7 L57.5 42.7 L56.3 42.4 L52.9 42.4 Z" fill="#8e8e8e"/><path d="M57.5 42.7 L61.1 42.7 L59.6 42.4 L56.3 42.4 Z" fill="#6c6c6c"/><path d="M61.1 42.7 L64.7 42.7 L63.0 42.4 L59.6 42.4 Z" fill="#8e8e8e"/><path d="M64.7 42.7 L68.3 42.7 L66.4 42.4 L63.0 42.4 Z" fill="#6c6c6c"/><path d="M68.3 42.7 L71.9 42.7 L69.8 42.4 L66.4 42.4 Z" fill="#8e8e8e"/><path d="M71.9 42.7 L75.4 42.7 L73.1 42.4 L69.8 42.4 Z" fill="#6c6c6c"/>
</g>
<defs>
<radialGradient id="sg682" cx="40%" cy="36%" r="66%"><stop offset="0" stop-color="#8a8a8a"/><stop offset="0.55" stop-color="#767676"/><stop offset="0.88" stop-color="#5a5a5a"/><stop offset="1" stop-color="#474747"/></radialGradient>
</defs>
<ellipse cx="40" cy="67" rx="22" ry="3.5" fill="#444" opacity="0.35"/>
<circle cx="36" cy="36" r="30.8" fill="url(#sg682)"/>
<path d="M13.5 21 Q17 16.5 29.5 18.5 Q26 26 26.5 38.5 Q17.5 38 12.5 36.5 Q11.5 27 13.5 21 Z" fill="#b0b0b0" opacity="0.72"/>
<path d="M58 14.5 Q65.5 23 66.6 35 L63.2 34.5 Q62 24 56.5 16 Z" fill="#6c7c9c" opacity="0.45"/>
</svg>
<svg class="b" style="left:657px;top:342px" width="18" height="17">
<circle cx="8" cy="8" r="6.8" fill="#626262"/>
<text x="8" y="12" text-anchor="middle" font-family="Liberation Sans" font-weight="bold" font-size="11.5" fill="#1d1d1d" stroke="#1d1d1d" stroke-width="0.5">S</text></svg>
<svg class="b" style="left:681px;top:344px" width="12" height="12">
<rect x="0" y="0" width="12" height="12" rx="2" fill="#cccccc"/>
<path d="M1.8 9.8 L3.9 6.8 L5.3 8.3 L7.4 5.6 L10.4 9.8 Z" fill="#1d1d1d"/></svg>
<svg class="b" style="left:765px;top:344px" width="12" height="12">
<rect x="0" y="0" width="12" height="12" rx="2.5" fill="#d2d2d2"/>
<rect x="0" y="3.1" width="12" height="1.4" fill="#4a4a4a"/><rect x="0" y="7.2" width="12" height="1.4" fill="#4a4a4a"/></svg>
<div class="b" style="left:662px;top:362px;width:112px;height:4px;background:#787878;border-radius:2px;"></div>
<div class="t" style="left:724px;top:373.19px;font-size:11px;line-height:14px;color:#c0c0c0;font-weight:normal;font-style:normal;letter-spacing:-0.1px;font-family:'Liberation Sans', sans-serif;">Out Color</div>
<div class="t" style="left:671.9px;top:394.02px;font-size:11.5px;line-height:14px;color:#d6d6d6;font-weight:bold;font-style:normal;letter-spacing:0px;font-family:'Liberation Sans', sans-serif;">Base Properties</div>
<div class="t" style="left:679.6px;top:413.05px;font-size:11.4px;line-height:14px;color:#d6d6d6;font-weight:bold;font-style:normal;letter-spacing:-0.2px;font-family:'Liberation Sans', sans-serif;">Diffuse</div>
<div class="t" style="left:687.8px;top:433.19px;font-size:11px;line-height:14px;color:#c0c0c0;font-weight:normal;font-style:normal;letter-spacing:0px;font-family:'Liberation Sans', sans-serif;">Color</div>
<svg class="b" style="left:654px;top:390px" width="40" height="60">
<path d="M9 8.2 H14 L11.5 12.5 Z" fill="#d8d8d8"/>
<path d="M17 28.2 H22 L19.5 32.5 Z" fill="#d8d8d8"/>
<path d="M12.5 12.5 V26 Q12.5 29.5 16 29.5 H17" fill="none" stroke="#7a7a7a" stroke-width="1"/>
<path d="M20 32.5 V47 Q20 50.5 23.5 50.5 H26" fill="none" stroke="#7a7a7a" stroke-width="1"/>
<circle cx="28" cy="50.4" r="1.9" fill="#666"/>
</svg>
<svg class="b" style="left:831.3px;top:237px" width="26" height="22"><text x="3" y="13.2" font-family="Liberation Serif" font-style="italic" font-size="15" letter-spacing="0.6" fill="#a0a0a0" stroke="#a0a0a0" stroke-width="0.2">f:x</text></svg>
<div class="t" style="left:856.2px;top:238.15px;font-size:14px;line-height:18px;color:#d0d0d0;font-weight:normal;font-style:normal;letter-spacing:0.2px;font-family:'Liberation Sans', sans-serif;">Output</div>
<div class="b" style="left:832px;top:258px;width:128px;height:224px;background:#1d1d1d;border-radius:8px;box-shadow:0 0 1.5px rgba(0,0,0,0.45);"></div>
<svg class="b" style="left:860px;top:266px" width="72" height="72" viewBox="0 0 72 72">
<defs>
<pattern id="chk860" width="19.2" height="19.2" patternUnits="userSpaceOnUse" x="-2.5" y="-5.8">
<rect width="19.2" height="19.2" fill="#9a9a9a"/><rect width="9.6" height="9.6" fill="#747474"/><rect x="9.6" y="9.6" width="9.6" height="9.6" fill="#747474"/></pattern>
<clipPath id="cl860"><rect width="72" height="72"/></clipPath>
</defs>
<g clip-path="url(#cl860)">
<rect width="72" height="72" fill="url(#chk860)"/>
<rect y="38" width="72" height="8" fill="#7e7e7e"/>
<path d="M-18.7 73.8 L8.6 73.8 L17.4 62.3 L-1.1 62.3 Z" fill="#6c6c6c"/><path d="M8.6 73.8 L36.0 73.8 L36.0 62.3 L17.4 62.3 Z" fill="#8e8e8e"/><path d="M36.0 73.8 L63.4 73.8 L54.6 62.3 L36.0 62.3 Z" fill="#6c6c6c"/><path d="M63.4 73.8 L90.7 73.8 L73.1 62.3 L54.6 62.3 Z" fill="#8e8e8e"/><path d="M-19.7 62.3 L-1.1 62.3 L7.9 56.4 L-6.2 56.4 Z" fill="#6c6c6c"/><path d="M-1.1 62.3 L17.4 62.3 L21.9 56.4 L7.9 56.4 Z" fill="#8e8e8e"/><path d="M17.4 62.3 L36.0 62.3 L36.0 56.4 L21.9 56.4 Z" fill="#6c6c6c"/><path d="M36.0 62.3 L54.6 62.3 L50.1 56.4 L36.0 56.4 Z" fill="#8e8e8e"/><path d="M54.6 62.3 L73.1 62.3 L64.1 56.4 L50.1 56.4 Z" fill="#6c6c6c"/><path d="M73.1 62.3 L91.7 62.3 L78.2 56.4 L64.1 56.4 Z" fill="#8e8e8e"/><path d="M-20.2 56.4 L-6.2 56.4 L2.1 52.8 L-9.2 52.8 Z" fill="#6c6c6c"/><path d="M-6.2 56.4 L7.9 56.4 L13.4 52.8 L2.1 52.8 Z" fill="#8e8e8e"/><path d="M7.9 56.4 L21.9 56.4 L24.7 52.8 L13.4 52.8 Z" fill="#6c6c6c"/><path d="M21.9 56.4 L36.0 56.4 L36.0 52.8 L24.7 52.8 Z" fill="#8e8e8e"/><path d="M36.0 56.4 L50.1 56.4 L47.3 52.8 L36.0 52.8 Z" fill="#6c6c6c"/><path d="M50.1 56.4 L64.1 56.4 L58.6 52.8 L47.3 52.8 Z" fill="#8e8e8e"/><path d="M64.1 56.4 L78.2 56.4 L69.9 52.8 L58.6 52.8 Z" fill="#6c6c6c"/><path d="M78.2 56.4 L92.2 56.4 L81.2 52.8 L69.9 52.8 Z" fill="#8e8e8e"/><path d="M-9.2 52.8 L2.1 52.8 L7.6 50.4 L-1.8 50.4 Z" fill="#8e8e8e"/><path d="M2.1 52.8 L13.4 52.8 L17.1 50.4 L7.6 50.4 Z" fill="#6c6c6c"/><path d="M13.4 52.8 L24.7 52.8 L26.5 50.4 L17.1 50.4 Z" fill="#8e8e8e"/><path d="M24.7 52.8 L36.0 52.8 L36.0 50.4 L26.5 50.4 Z" fill="#6c6c6c"/><path d="M36.0 52.8 L47.3 52.8 L45.5 50.4 L36.0 50.4 Z" fill="#8e8e8e"/><path d="M47.3 52.8 L58.6 52.8 L54.9 50.4 L45.5 50.4 Z" fill="#6c6c6c"/><path d="M58.6 52.8 L69.9 52.8 L64.4 50.4 L54.9 50.4 Z" fill="#8e8e8e"/><path d="M69.9 52.8 L81.2 52.8 L73.8 50.4 L64.4 50.4 Z" fill="#6c6c6c"/><path d="M-11.3 50.4 L-1.8 50.4 L3.5 48.6 L-4.6 48.6 Z" fill="#8e8e8e"/><path d="M-1.8 50.4 L7.6 50.4 L11.6 48.6 L3.5 48.6 Z" fill="#6c6c6c"/><path d="M7.6 50.4 L17.1 50.4 L19.8 48.6 L11.6 48.6 Z" fill="#8e8e8e"/><path d="M17.1 50.4 L26.5 50.4 L27.9 48.6 L19.8 48.6 Z" fill="#6c6c6c"/><path d="M26.5 50.4 L36.0 50.4 L36.0 48.6 L27.9 48.6 Z" fill="#8e8e8e"/><path d="M36.0 50.4 L45.5 50.4 L44.1 48.6 L36.0 48.6 Z" fill="#6c6c6c"/><path d="M45.5 50.4 L54.9 50.4 L52.2 48.6 L44.1 48.6 Z" fill="#8e8e8e"/><path d="M54.9 50.4 L64.4 50.4 L60.4 48.6 L52.2 48.6 Z" fill="#6c6c6c"/><path d="M64.4 50.4 L73.8 50.4 L68.5 48.6 L60.4 48.6 Z" fill="#8e8e8e"/><path d="M73.8 50.4 L83.3 50.4 L76.6 48.6 L68.5 48.6 Z" fill="#6c6c6c"/><path d="M-12.8 48.6 L-4.6 48.6 L0.4 47.3 L-6.7 47.3 Z" fill="#8e8e8e"/><path d="M-4.6 48.6 L3.5 48.6 L7.5 47.3 L0.4 47.3 Z" fill="#6c6c6c"/><path d="M3.5 48.6 L11.6 48.6 L14.6 47.3 L7.5 47.3 Z" fill="#8e8e8e"/><path d="M11.6 48.6 L19.8 48.6 L21.8 47.3 L14.6 47.3 Z" fill="#6c6c6c"/><path d="M19.8 48.6 L27.9 48.6 L28.9 47.3 L21.8 47.3 Z" fill="#8e8e8e"/><path d="M27.9 48.6 L36.0 48.6 L36.0 47.3 L28.9 47.3 Z" fill="#6c6c6c"/><path d="M36.0 48.6 L44.1 48.6 L43.1 47.3 L36.0 47.3 Z" fill="#8e8e8e"/><path d="M44.1 48.6 L52.2 48.6 L50.2 47.3 L43.1 47.3 Z" fill="#6c6c6c"/><path d="M52.2 48.6 L60.4 48.6 L57.4 47.3 L50.2 47.3 Z" fill="#8e8e8e"/><path d="M60.4 48.6 L68.5 48.6 L64.5 47.3 L57.4 47.3 Z" fill="#6c6c6c"/><path d="M68.5 48.6 L76.6 48.6 L71.6 47.3 L64.5 47.3 Z" fill="#8e8e8e"/><path d="M76.6 48.6 L84.8 48.6 L78.7 47.3 L71.6 47.3 Z" fill="#6c6c6c"/><path d="M-6.7 47.3 L0.4 47.3 L4.3 46.3 L-2.0 46.3 Z" fill="#6c6c6c"/><path d="M0.4 47.3 L7.5 47.3 L10.6 46.3 L4.3 46.3 Z" fill="#8e8e8e"/><path d="M7.5 47.3 L14.6 47.3 L17.0 46.3 L10.6 46.3 Z" fill="#6c6c6c"/><path d="M14.6 47.3 L21.8 47.3 L23.3 46.3 L17.0 46.3 Z" fill="#8e8e8e"/><path d="M21.8 47.3 L28.9 47.3 L29.7 46.3 L23.3 46.3 Z" fill="#6c6c6c"/><path d="M28.9 47.3 L36.0 47.3 L36.0 46.3 L29.7 46.3 Z" fill="#8e8e8e"/><path d="M36.0 47.3 L43.1 47.3 L42.3 46.3 L36.0 46.3 Z" fill="#6c6c6c"/><path d="M43.1 47.3 L50.2 47.3 L48.7 46.3 L42.3 46.3 Z" fill="#8e8e8e"/><path d="M50.2 47.3 L57.4 47.3 L55.0 46.3 L48.7 46.3 Z" fill="#6c6c6c"/><path d="M57.4 47.3 L64.5 47.3 L61.4 46.3 L55.0 46.3 Z" fill="#8e8e8e"/><path d="M64.5 47.3 L71.6 47.3 L67.7 46.3 L61.4 46.3 Z" fill="#6c6c6c"/><path d="M71.6 47.3 L78.7 47.3 L74.0 46.3 L67.7 46.3 Z" fill="#8e8e8e"/><path d="M-8.4 46.3 L-2.0 46.3 L1.7 45.5 L-4.0 45.5 Z" fill="#6c6c6c"/><path d="M-2.0 46.3 L4.3 46.3 L7.4 45.5 L1.7 45.5 Z" fill="#8e8e8e"/><path d="M4.3 46.3 L10.6 46.3 L13.1 45.5 L7.4 45.5 Z" fill="#6c6c6c"/><path d="M10.6 46.3 L17.0 46.3 L18.9 45.5 L13.1 45.5 Z" fill="#8e8e8e"/><path d="M17.0 46.3 L23.3 46.3 L24.6 45.5 L18.9 45.5 Z" fill="#6c6c6c"/><path d="M23.3 46.3 L29.7 46.3 L30.3 45.5 L24.6 45.5 Z" fill="#8e8e8e"/><path d="M29.7 46.3 L36.0 46.3 L36.0 45.5 L30.3 45.5 Z" fill="#6c6c6c"/><path d="M36.0 46.3 L42.3 46.3 L41.7 45.5 L36.0 45.5 Z" fill="#8e8e8e"/><path d="M42.3 46.3 L48.7 46.3 L47.4 45.5 L41.7 45.5 Z" fill="#6c6c6c"/><path d="M48.7 46.3 L55.0 46.3 L53.1 45.5 L47.4 45.5 Z" fill="#8e8e8e"/><path d="M55.0 46.3 L61.4 46.3 L58.9 45.5 L53.1 45.5 Z" fill="#6c6c6c"/><path d="M61.4 46.3 L67.7 46.3 L64.6 45.5 L58.9 45.5 Z" fill="#8e8e8e"/><path d="M67.7 46.3 L74.0 46.3 L70.3 45.5 L64.6 45.5 Z" fill="#6c6c6c"/><path d="M74.0 46.3 L80.4 46.3 L76.0 45.5 L70.3 45.5 Z" fill="#8e8e8e"/><path d="M-4.0 45.5 L1.7 45.5 L4.8 44.8 L-0.4 44.8 Z" fill="#8e8e8e"/><path d="M1.7 45.5 L7.4 45.5 L10.0 44.8 L4.8 44.8 Z" fill="#6c6c6c"/><path d="M7.4 45.5 L13.1 45.5 L15.2 44.8 L10.0 44.8 Z" fill="#8e8e8e"/><path d="M13.1 45.5 L18.9 45.5 L20.4 44.8 L15.2 44.8 Z" fill="#6c6c6c"/><path d="M18.9 45.5 L24.6 45.5 L25.6 44.8 L20.4 44.8 Z" fill="#8e8e8e"/><path d="M24.6 45.5 L30.3 45.5 L30.8 44.8 L25.6 44.8 Z" fill="#6c6c6c"/><path d="M30.3 45.5 L36.0 45.5 L36.0 44.8 L30.8 44.8 Z" fill="#8e8e8e"/><path d="M36.0 45.5 L41.7 45.5 L41.2 44.8 L36.0 44.8 Z" fill="#6c6c6c"/><path d="M41.7 45.5 L47.4 45.5 L46.4 44.8 L41.2 44.8 Z" fill="#8e8e8e"/><path d="M47.4 45.5 L53.1 45.5 L51.6 44.8 L46.4 44.8 Z" fill="#6c6c6c"/><path d="M53.1 45.5 L58.9 45.5 L56.8 44.8 L51.6 44.8 Z" fill="#8e8e8e"/><path d="M58.9 45.5 L64.6 45.5 L62.0 44.8 L56.8 44.8 Z" fill="#6c6c6c"/><path d="M64.6 45.5 L70.3 45.5 L67.2 44.8 L62.0 44.8 Z" fill="#8e8e8e"/><path d="M70.3 45.5 L76.0 45.5 L72.4 44.8 L67.2 44.8 Z" fill="#6c6c6c"/><path d="M-5.6 44.8 L-0.4 44.8 L2.6 44.2 L-2.2 44.2 Z" fill="#8e8e8e"/><path d="M-0.4 44.8 L4.8 44.8 L7.4 44.2 L2.6 44.2 Z" fill="#6c6c6c"/><path d="M4.8 44.8 L10.0 44.8 L12.1 44.2 L7.4 44.2 Z" fill="#8e8e8e"/><path d="M10.0 44.8 L15.2 44.8 L16.9 44.2 L12.1 44.2 Z" fill="#6c6c6c"/><path d="M15.2 44.8 L20.4 44.8 L21.7 44.2 L16.9 44.2 Z" fill="#8e8e8e"/><path d="M20.4 44.8 L25.6 44.8 L26.5 44.2 L21.7 44.2 Z" fill="#6c6c6c"/><path d="M25.6 44.8 L30.8 44.8 L31.2 44.2 L26.5 44.2 Z" fill="#8e8e8e"/><path d="M30.8 44.8 L36.0 44.8 L36.0 44.2 L31.2 44.2 Z" fill="#6c6c6c"/><path d="M36.0 44.8 L41.2 44.8 L40.8 44.2 L36.0 44.2 Z" fill="#8e8e8e"/><path d="M41.2 44.8 L46.4 44.8 L45.5 44.2 L40.8 44.2 Z" fill="#6c6c6c"/><path d="M46.4 44.8 L51.6 44.8 L50.3 44.2 L45.5 44.2 Z" fill="#8e8e8e"/><path d="M51.6 44.8 L56.8 44.8 L55.1 44.2 L50.3 44.2 Z" fill="#6c6c6c"/><path d="M56.8 44.8 L62.0 44.8 L59.9 44.2 L55.1 44.2 Z" fill="#8e8e8e"/><path d="M62.0 44.8 L67.2 44.8 L64.6 44.2 L59.9 44.2 Z" fill="#6c6c6c"/><path d="M67.2 44.8 L72.4 44.8 L69.4 44.2 L64.6 44.2 Z" fill="#8e8e8e"/><path d="M72.4 44.8 L77.6 44.8 L74.2 44.2 L69.4 44.2 Z" fill="#6c6c6c"/><path d="M-6.9 44.2 L-2.2 44.2 L0.7 43.8 L-3.7 43.8 Z" fill="#8e8e8e"/><path d="M-2.2 44.2 L2.6 44.2 L5.2 43.8 L0.7 43.8 Z" fill="#6c6c6c"/><path d="M2.6 44.2 L7.4 44.2 L9.6 43.8 L5.2 43.8 Z" fill="#8e8e8e"/><path d="M7.4 44.2 L12.1 44.2 L14.0 43.8 L9.6 43.8 Z" fill="#6c6c6c"/><path d="M12.1 44.2 L16.9 44.2 L18.4 43.8 L14.0 43.8 Z" fill="#8e8e8e"/><path d="M16.9 44.2 L21.7 44.2 L22.8 43.8 L18.4 43.8 Z" fill="#6c6c6c"/><path d="M21.7 44.2 L26.5 44.2 L27.2 43.8 L22.8 43.8 Z" fill="#8e8e8e"/><path d="M26.5 44.2 L31.2 44.2 L31.6 43.8 L27.2 43.8 Z" fill="#6c6c6c"/><path d="M31.2 44.2 L36.0 44.2 L36.0 43.8 L31.6 43.8 Z" fill="#8e8e8e"/><path d="M36.0 44.2 L40.8 44.2 L40.4 43.8 L36.0 43.8 Z" fill="#6c6c6c"/><path d="M40.8 44.2 L45.5 44.2 L44.8 43.8 L40.4 43.8 Z" fill="#8e8e8e"/><path d="M45.5 44.2 L50.3 44.2 L49.2 43.8 L44.8 43.8 Z" fill="#6c6c6c"/><path d="M50.3 44.2 L55.1 44.2 L53.6 43.8 L49.2 43.8 Z" fill="#8e8e8e"/><path d="M55.1 44.2 L59.9 44.2 L58.0 43.8 L53.6 43.8 Z" fill="#6c6c6c"/><path d="M59.9 44.2 L64.6 44.2 L62.4 43.8 L58.0 43.8 Z" fill="#8e8e8e"/><path d="M64.6 44.2 L69.4 44.2 L66.8 43.8 L62.4 43.8 Z" fill="#6c6c6c"/><path d="M69.4 44.2 L74.2 44.2 L71.3 43.8 L66.8 43.8 Z" fill="#8e8e8e"/><path d="M74.2 44.2 L78.9 44.2 L75.7 43.8 L71.3 43.8 Z" fill="#6c6c6c"/><path d="M-3.7 43.8 L0.7 43.8 L3.2 43.4 L-0.9 43.4 Z" fill="#6c6c6c"/><path d="M0.7 43.8 L5.2 43.8 L7.3 43.4 L3.2 43.4 Z" fill="#8e8e8e"/><path d="M5.2 43.8 L9.6 43.8 L11.4 43.4 L7.3 43.4 Z" fill="#6c6c6c"/><path d="M9.6 43.8 L14.0 43.8 L15.5 43.4 L11.4 43.4 Z" fill="#8e8e8e"/><path d="M14.0 43.8 L18.4 43.8 L19.6 43.4 L15.5 43.4 Z" fill="#6c6c6c"/><path d="M18.4 43.8 L22.8 43.8 L23.7 43.4 L19.6 43.4 Z" fill="#8e8e8e"/><path d="M22.8 43.8 L27.2 43.8 L27.8 43.4 L23.7 43.4 Z" fill="#6c6c6c"/><path d="M27.2 43.8 L31.6 43.8 L31.9 43.4 L27.8 43.4 Z" fill="#8e8e8e"/><path d="M31.6 43.8 L36.0 43.8 L36.0 43.4 L31.9 43.4 Z" fill="#6c6c6c"/><path d="M36.0 43.8 L40.4 43.8 L40.1 43.4 L36.0 43.4 Z" fill="#8e8e8e"/><path d="M40.4 43.8 L44.8 43.8 L44.2 43.4 L40.1 43.4 Z" fill="#6c6c6c"/><path d="M44.8 43.8 L49.2 43.8 L48.3 43.4 L44.2 43.4 Z" fill="#8e8e8e"/><path d="M49.2 43.8 L53.6 43.8 L52.4 43.4 L48.3 43.4 Z" fill="#6c6c6c"/><path d="M53.6 43.8 L58.0 43.8 L56.5 43.4 L52.4 43.4 Z" fill="#8e8e8e"/><path d="M58.0 43.8 L62.4 43.8 L60.6 43.4 L56.5 43.4 Z" fill="#6c6c6c"/><path d="M62.4 43.8 L66.8 43.8 L64.7 43.4 L60.6 43.4 Z" fill="#8e8e8e"/><path d="M66.8 43.8 L71.3 43.8 L68.8 43.4 L64.7 43.4 Z" fill="#6c6c6c"/><path d="M71.3 43.8 L75.7 43.8 L72.9 43.4 L68.8 43.4 Z" fill="#8e8e8e"/><path d="M-4.9 43.4 L-0.9 43.4 L1.6 43.0 L-2.2 43.0 Z" fill="#6c6c6c"/><path d="M-0.9 43.4 L3.2 43.4 L5.4 43.0 L1.6 43.0 Z" fill="#8e8e8e"/><path d="M3.2 43.4 L7.3 43.4 L9.2 43.0 L5.4 43.0 Z" fill="#6c6c6c"/><path d="M7.3 43.4 L11.4 43.4 L13.1 43.0 L9.2 43.0 Z" fill="#8e8e8e"/><path d="M11.4 43.4 L15.5 43.4 L16.9 43.0 L13.1 43.0 Z" fill="#6c6c6c"/><path d="M15.5 43.4 L19.6 43.4 L20.7 43.0 L16.9 43.0 Z" fill="#8e8e8e"/><path d="M19.6 43.4 L23.7 43.4 L24.5 43.0 L20.7 43.0 Z" fill="#6c6c6c"/><path d="M23.7 43.4 L27.8 43.4 L28.4 43.0 L24.5 43.0 Z" fill="#8e8e8e"/><path d="M27.8 43.4 L31.9 43.4 L32.2 43.0 L28.4 43.0 Z" fill="#6c6c6c"/><path d="M31.9 43.4 L36.0 43.4 L36.0 43.0 L32.2 43.0 Z" fill="#8e8e8e"/><path d="M36.0 43.4 L40.1 43.4 L39.8 43.0 L36.0 43.0 Z" fill="#6c6c6c"/><path d="M40.1 43.4 L44.2 43.4 L43.6 43.0 L39.8 43.0 Z" fill="#8e8e8e"/><path d="M44.2 43.4 L48.3 43.4 L47.5 43.0 L43.6 43.0 Z" fill="#6c6c6c"/><path d="M48.3 43.4 L52.4 43.4 L51.3 43.0 L47.5 43.0 Z" fill="#8e8e8e"/><path d="M52.4 43.4 L56.5 43.4 L55.1 43.0 L51.3 43.0 Z" fill="#6c6c6c"/><path d="M56.5 43.4 L60.6 43.4 L58.9 43.0 L55.1 43.0 Z" fill="#8e8e8e"/><path d="M60.6 43.4 L64.7 43.4 L62.8 43.0 L58.9 43.0 Z" fill="#6c6c6c"/><path d="M64.7 43.4 L68.8 43.4 L66.6 43.0 L62.8 43.0 Z" fill="#8e8e8e"/><path d="M68.8 43.4 L72.9 43.4 L70.4 43.0 L66.6 43.0 Z" fill="#6c6c6c"/><path d="M72.9 43.4 L76.9 43.4 L74.2 43.0 L70.4 43.0 Z" fill="#8e8e8e"/><path d="M-6.1 43.0 L-2.2 43.0 L0.1 42.7 L-3.4 42.7 Z" fill="#6c6c6c"/><path d="M-2.2 43.0 L1.6 43.0 L3.7 42.7 L0.1 42.7 Z" fill="#8e8e8e"/><path d="M1.6 43.0 L5.4 43.0 L7.3 42.7 L3.7 42.7 Z" fill="#6c6c6c"/><path d="M5.4 43.0 L9.2 43.0 L10.9 42.7 L7.3 42.7 Z" fill="#8e8e8e"/><path d="M9.2 43.0 L13.1 43.0 L14.5 42.7 L10.9 42.7 Z" fill="#6c6c6c"/><path d="M13.1 43.0 L16.9 43.0 L18.1 42.7 L14.5 42.7 Z" fill="#8e8e8e"/><path d="M16.9 43.0 L20.7 43.0 L21.7 42.7 L18.1 42.7 Z" fill="#6c6c6c"/><path d="M20.7 43.0 L24.5 43.0 L25.2 42.7 L21.7 42.7 Z" fill="#8e8e8e"/><path d="M24.5 43.0 L28.4 43.0 L28.8 42.7 L25.2 42.7 Z" fill="#6c6c6c"/><path d="M28.4 43.0 L32.2 43.0 L32.4 42.7 L28.8 42.7 Z" fill="#8e8e8e"/><path d="M32.2 43.0 L36.0 43.0 L36.0 42.7 L32.4 42.7 Z" fill="#6c6c6c"/><path d="M36.0 43.0 L39.8 43.0 L39.6 42.7 L36.0 42.7 Z" fill="#8e8e8e"/><path d="M39.8 43.0 L43.6 43.0 L43.2 42.7 L39.6 42.7 Z" fill="#6c6c6c"/><path d="M43.6 43.0 L47.5 43.0 L46.8 42.7 L43.2 42.7 Z" fill="#8e8e8e"/><path d="M47.5 43.0 L51.3 43.0 L50.3 42.7 L46.8 42.7 Z" fill="#6c6c6c"/><path d="M51.3 43.0 L55.1 43.0 L53.9 42.7 L50.3 42.7 Z" fill="#8e8e8e"/><path d="M55.1 43.0 L58.9 43.0 L57.5 42.7 L53.9 42.7 Z" fill="#6c6c6c"/><path d="M58.9 43.0 L62.8 43.0 L61.1 42.7 L57.5 42.7 Z" fill="#8e8e8e"/><path d="M62.8 43.0 L66.6 43.0 L64.7 42.7 L61.1 42.7 Z" fill="#6c6c6c"/><path d="M66.6 43.0 L70.4 43.0 L68.3 42.7 L64.7 42.7 Z" fill="#8e8e8e"/><path d="M70.4 43.0 L74.2 43.0 L71.9 42.7 L68.3 42.7 Z" fill="#6c6c6c"/><path d="M74.2 43.0 L78.1 43.0 L75.4 42.7 L71.9 42.7 Z" fill="#8e8e8e"/><path d="M-3.4 42.7 L0.1 42.7 L2.2 42.4 L-1.1 42.4 Z" fill="#8e8e8e"/><path d="M0.1 42.7 L3.7 42.7 L5.6 42.4 L2.2 42.4 Z" fill="#6c6c6c"/><path d="M3.7 42.7 L7.3 42.7 L9.0 42.4 L5.6 42.4 Z" fill="#8e8e8e"/><path d="M7.3 42.7 L10.9 42.7 L12.4 42.4 L9.0 42.4 Z" fill="#6c6c6c"/><path d="M10.9 42.7 L14.5 42.7 L15.7 42.4 L12.4 42.4 Z" fill="#8e8e8e"/><path d="M14.5 42.7 L18.1 42.7 L19.1 42.4 L15.7 42.4 Z" fill="#6c6c6c"/><path d="M18.1 42.7 L21.7 42.7 L22.5 42.4 L19.1 42.4 Z" fill="#8e8e8e"/><path d="M21.7 42.7 L25.2 42.7 L25.9 42.4 L22.5 42.4 Z" fill="#6c6c6c"/><path d="M25.2 42.7 L28.8 42.7 L29.2 42.4 L25.9 42.4 Z" fill="#8e8e8e"/><path d="M28.8 42.7 L32.4 42.7 L32.6 42.4 L29.2 42.4 Z" fill="#6c6c6c"/><path d="M32.4 42.7 L36.0 42.7 L36.0 42.4 L32.6 42.4 Z" fill="#8e8e8e"/><path d="M36.0 42.7 L39.6 42.7 L39.4 42.4 L36.0 42.4 Z" fill="#6c6c6c"/><path d="M39.6 42.7 L43.2 42.7 L42.8 42.4 L39.4 42.4 Z" fill="#8e8e8e"/><path d="M43.2 42.7 L46.8 42.7 L46.1 42.4 L42.8 42.4 Z" fill="#6c6c6c"/><path d="M46.8 42.7 L50.3 42.7 L49.5 42.4 L46.1 42.4 Z" fill="#8e8e8e"/><path d="M50.3 42.7 L53.9 42.7 L52.9 42.4 L49.5 42.4 Z" fill="#6c6c6c"/><path d="M53.9 42.7 L57.5 42.7 L56.3 42.4 L52.9 42.4 Z" fill="#8e8e8e"/><path d="M57.5 42.7 L61.1 42.7 L59.6 42.4 L56.3 42.4 Z" fill="#6c6c6c"/><path d="M61.1 42.7 L64.7 42.7 L63.0 42.4 L59.6 42.4 Z" fill="#8e8e8e"/><path d="M64.7 42.7 L68.3 42.7 L66.4 42.4 L63.0 42.4 Z" fill="#6c6c6c"/><path d="M68.3 42.7 L71.9 42.7 L69.8 42.4 L66.4 42.4 Z" fill="#8e8e8e"/><path d="M71.9 42.7 L75.4 42.7 L73.1 42.4 L69.8 42.4 Z" fill="#6c6c6c"/>
</g>
<defs>
<radialGradient id="sg860" cx="40%" cy="36%" r="66%"><stop offset="0" stop-color="#8a8a8a"/><stop offset="0.55" stop-color="#767676"/><stop offset="0.88" stop-color="#5a5a5a"/><stop offset="1" stop-color="#474747"/></radialGradient>
</defs>
<ellipse cx="40" cy="67" rx="22" ry="3.5" fill="#444" opacity="0.35"/>
<circle cx="36" cy="36" r="30.8" fill="url(#sg860)"/>
<path d="M13.5 21 Q17 16.5 29.5 18.5 Q26 26 26.5 38.5 Q17.5 38 12.5 36.5 Q11.5 27 13.5 21 Z" fill="#b0b0b0" opacity="0.72"/>
<path d="M58 14.5 Q65.5 23 66.6 35 L63.2 34.5 Q62 24 56.5 16 Z" fill="#6c7c9c" opacity="0.45"/>
</svg>
<svg class="b" style="left:835px;top:342px" width="18" height="17">
<circle cx="8" cy="8" r="6.8" fill="#626262"/>
<text x="8" y="12" text-anchor="middle" font-family="Liberation Sans" font-weight="bold" font-size="11.5" fill="#1d1d1d" stroke="#1d1d1d" stroke-width="0.5">S</text></svg>
<svg class="b" style="left:859px;top:344px" width="12" height="12">
<rect x="0" y="0" width="12" height="12" rx="2" fill="#cccccc"/>
<path d="M1.8 9.8 L3.9 6.8 L5.3 8.3 L7.4 5.6 L10.4 9.8 Z" fill="#1d1d1d"/></svg>
<svg class="b" style="left:943px;top:344px" width="12" height="12">
<rect x="0" y="0" width="12" height="12" rx="2.5" fill="#d2d2d2"/>
<rect x="0" y="3.1" width="12" height="1.4" fill="#4a4a4a"/><rect x="0" y="7.2" width="12" height="1.4" fill="#4a4a4a"/></svg>
<div class="b" style="left:840px;top:362px;width:112px;height:4px;background:#787878;border-radius:2px;"></div>
<div class="t" style="left:843px;top:373.19px;font-size:11px;line-height:14px;color:#c0c0c0;font-weight:normal;font-style:normal;letter-spacing:-0.1px;font-family:'Liberation Sans', sans-serif;">Surface</div>
<div class="t" style="left:843px;top:393.19px;font-size:11px;line-height:14px;color:#c0c0c0;font-weight:normal;font-style:normal;letter-spacing:-0.1px;font-family:'Liberation Sans', sans-serif;">Displacement</div>
<div class="t" style="left:843px;top:413.19px;font-size:11px;line-height:14px;color:#c0c0c0;font-weight:normal;font-style:normal;letter-spacing:-0.1px;font-family:'Liberation Sans', sans-serif;">Volume</div>
<div class="t" style="left:843px;top:433.19px;font-size:11px;line-height:14px;color:#c0c0c0;font-weight:normal;font-style:normal;letter-spacing:-0.1px;font-family:'Liberation Sans', sans-serif;">Environment</div>
<div class="t" style="left:843px;top:453.19px;font-size:11px;line-height:14px;color:#c0c0c0;font-weight:normal;font-style:normal;letter-spacing:-0.1px;font-family:'Liberation Sans', sans-serif;">Light</div>
<svg class="b" style="left:780px;top:370px" width="56" height="20"><line x1="0" y1="9.6" x2="56" y2="9.6" stroke="#bfa948" stroke-width="1.7"/></svg>
<svg class="b" style="left:570px;top:430px" width="90" height="20">
<rect x="8" y="8" width="52" height="4" fill="#ffffff"/>
<path d="M59 5 L79 10 L59 15 Z" fill="#ffffff"/>
</svg>
<svg class="b" style="left:564px;top:432px" width="12" height="12"><circle cx="6" cy="6" r="4.1" fill="#79734f" stroke="#d9c64e" stroke-width="1.5"/></svg>
<svg class="b" style="left:776px;top:374px" width="12" height="12"><circle cx="6" cy="6" r="4.8" fill="#d9c64e"/></svg>
<svg class="b" style="left:648px;top:394px" width="12" height="12"><circle cx="6" cy="6" r="3.8" fill="none" stroke="#4a4a4a" stroke-width="1.2"/></svg>
<svg class="b" style="left:648px;top:414px" width="12" height="12"><circle cx="6" cy="6" r="3.8" fill="none" stroke="#4a4a4a" stroke-width="1.2"/></svg>
<svg class="b" style="left:648px;top:434px" width="12" height="12"><circle cx="6" cy="6" r="4.1" fill="#79734f" stroke="#d9c64e" stroke-width="1.5"/></svg>
<svg class="b" style="left:826px;top:374px" width="12" height="12"><circle cx="6" cy="6" r="4.8" fill="#d9c64e"/></svg>
<svg class="b" style="left:826px;top:394px" width="12" height="12"><circle cx="6" cy="6" r="4.1" fill="#6c6280" stroke="#b27ee6" stroke-width="1.5"/></svg>
<svg class="b" style="left:826px;top:414px" width="12" height="12"><circle cx="6" cy="6" r="4.1" fill="#79734f" stroke="#d9c64e" stroke-width="1.5"/></svg>
<svg class="b" style="left:826px;top:434px" width="12" height="12"><circle cx="6" cy="6" r="4.1" fill="#79734f" stroke="#d9c64e" stroke-width="1.5"/></svg>
<svg class="b" style="left:826px;top:454px" width="12" height="12"><circle cx="6" cy="6" r="4.1" fill="#79734f" stroke="#d9c64e" stroke-width="1.5"/></svg>
<svg class="b" style="left:339.8px;top:450px" width="20" height="28" viewBox="0 0 20 28">
<g transform="translate(2,2)"><path d="M0 0 V17.6 L4.3 13.6 L7.3 20.8 L10.6 19.4 L7.7 12.6 H13.6 Z" fill="#ffffff" stroke="#000" stroke-width="1.3" stroke-linejoin="round"/></g></svg>
<svg class="b" style="left:567.8px;top:437.5px" width="20" height="28" viewBox="0 0 20 28">
<g transform="translate(2,2)"><path d="M0 0 V17.6 L4.3 13.6 L7.3 20.8 L10.6 19.4 L7.7 12.6 H13.6 Z" fill="#ffffff" stroke="#000" stroke-width="1.3" stroke-linejoin="round"/></g></svg>
<div class="b" style="left:863px;top:544px;width:151px;height:80px;background:transparent;box-sizing:border-box;border:1.5px solid #8c8c8c;border-bottom:none;"></div>
<div class="b" style="left:929px;top:579px;width:19px;height:21px;background:#777777;"></div>
<div class="b" style="left:960px;top:570px;width:20px;height:31px;background:#777777;"></div>
<div class="b" style="left:987px;top:570px;width:20px;height:34px;background:#777777;"></div>
<div class="b" style="left:9px;top:602px;width:200px;height:18px;background:rgba(80,80,80,0.5);border-radius:4px;"></div>
<div class="t" style="left:13px;top:604.86px;font-size:10.5px;line-height:13px;color:#c0c0c0;font-weight:bold;font-style:normal;letter-spacing:0px;font-family:'Liberation Sans', sans-serif;">Selection:</div>
<div class="t" style="left:113px;top:604.19px;font-size:11px;line-height:14px;color:#c0c0c0;font-weight:normal;font-style:normal;letter-spacing:0px;font-family:'Liberation Sans', sans-serif;">None</div>
</body></html>
